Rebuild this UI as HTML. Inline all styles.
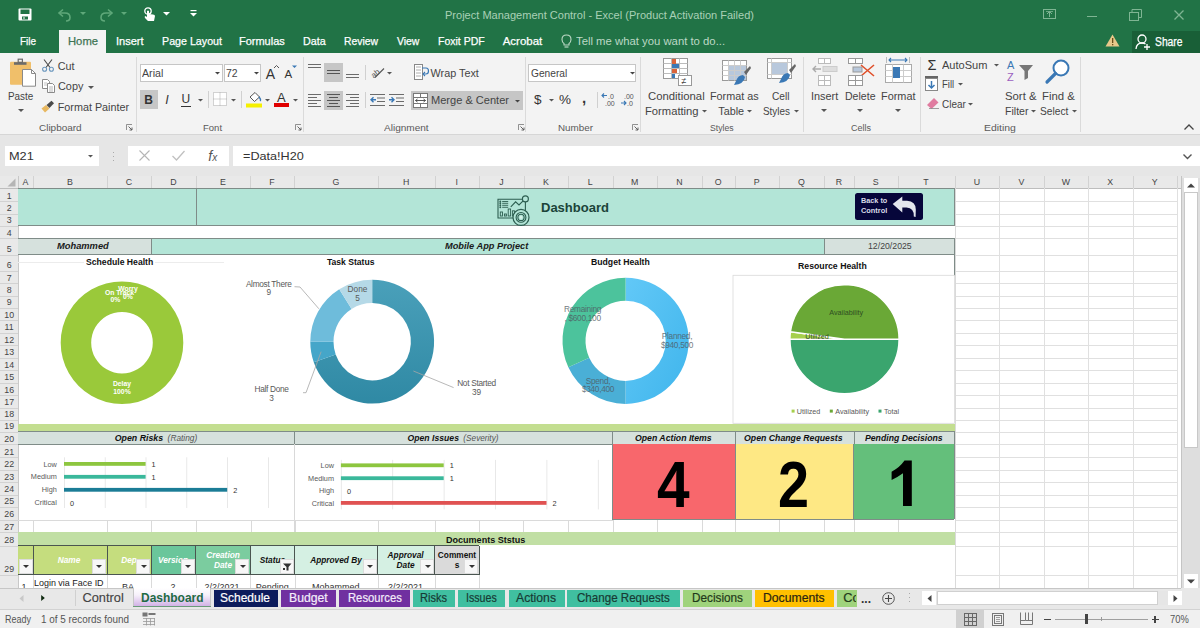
<!DOCTYPE html><html><head><meta charset="utf-8"><style>
html,body{margin:0;padding:0;}
body{width:1200px;height:628px;overflow:hidden;position:relative;background:#fff;font-family:"Liberation Sans",sans-serif;}
.t{position:absolute;white-space:nowrap;line-height:1;}
.r{position:absolute;}
.s{position:absolute;overflow:visible;}
</style></head><body>
<div class="r" style="left:0.00px;top:0.00px;width:1200.00px;height:53.00px;background:#217346;"></div>
<svg class="s" style="left:18.00px;top:8.00px;" width="14" height="13" viewBox="0 0 14 13"><rect x="0.5" y="0.5" width="13" height="12" rx="1" fill="#fff"/><rect x="2.5" y="1.5" width="9" height="4.5" fill="#217346"/><rect x="4" y="8.5" width="6" height="3" fill="#217346"/><rect x="5.5" y="9" width="1" height="2" fill="#fff"/></svg>
<svg class="s" style="left:57.00px;top:8.00px;" width="16" height="14" viewBox="0 0 16 14"><path d="M3 5 L8 5 Q13 5 13 9.5 Q13 13 9 13" stroke="#5fa87a" stroke-width="1.6" fill="none"/><path d="M6 1.5 L2 5 L6 8.5" stroke="#5fa87a" stroke-width="1.6" fill="none"/></svg>
<svg class="s" style="left:80.00px;top:12.00px;" width="6" height="4" viewBox="0 0 6 4"><path d="M0 0 L6 0 L3 3z" fill="#5fa87a"/></svg>
<svg class="s" style="left:98.00px;top:8.00px;" width="16" height="14" viewBox="0 0 16 14"><path d="M13 5 L8 5 Q3 5 3 9.5 Q3 13 7 13" stroke="#5fa87a" stroke-width="1.6" fill="none"/><path d="M10 1.5 L14 5 L10 8.5" stroke="#5fa87a" stroke-width="1.6" fill="none"/></svg>
<svg class="s" style="left:121.00px;top:12.00px;" width="6" height="4" viewBox="0 0 6 4"><path d="M0 0 L6 0 L3 3z" fill="#5fa87a"/></svg>
<svg class="s" style="left:143.00px;top:7.00px;" width="13" height="15" viewBox="0 0 13 15"><circle cx="5" cy="4" r="3.2" stroke="#fff" stroke-width="1.3" fill="none"/><path d="M4 4 L4 10 L2.5 9 Q1 9.5 2 11 L5 14 L11 14 L12 9 Q12 7.5 10 7.5 L6 7 L6 4 Q5 3 4 4z" fill="#fff"/></svg>
<svg class="s" style="left:163.00px;top:12.00px;" width="7" height="4" viewBox="0 0 7 4"><path d="M0 0 L7 0 L3.5 3.5z" fill="#fff"/></svg>
<svg class="s" style="left:190.00px;top:10.00px;" width="7" height="8" viewBox="0 0 7 8"><rect x="0.5" y="0" width="6" height="1.2" fill="#fff"/><path d="M0 3 L7 3 L3.5 6.5z" fill="#fff"/></svg>
<div class="t" style="left:445.00px;top:9.78px;font-size:11.50px;color:#a9d1b6;font-weight:normal;font-style:normal;transform:scaleX(0.959);transform-origin:0 50%;">Project Management Control - Excel (Product Activation Failed)</div>
<svg class="s" style="left:1043.00px;top:9.00px;" width="13" height="10" viewBox="0 0 13 10"><rect x="0.5" y="0.5" width="12" height="9" stroke="#7fb593" fill="none"/><path d="M6.5 8 L6.5 3 M4 5 L6.5 2.5 L9 5" stroke="#7fb593" fill="none"/><rect x="3" y="2" width="7" height="0.8" fill="#7fb593"/></svg>
<div class="r" style="left:1087.00px;top:16.00px;width:10.00px;height:1.00px;background:#7fb593;"></div>
<svg class="s" style="left:1129.00px;top:9.00px;" width="13" height="12" viewBox="0 0 13 12"><rect x="0.5" y="3.5" width="9" height="8" stroke="#7fb593" fill="none"/><path d="M3 3.5 L3 0.5 L12.5 0.5 L12.5 8.5 L9.5 8.5" stroke="#7fb593" fill="none"/></svg>
<svg class="s" style="left:1174.00px;top:10.00px;" width="10" height="10" viewBox="0 0 10 10"><path d="M0.5 0.5 L9.5 9.5 M9.5 0.5 L0.5 9.5" stroke="#7fb593" stroke-width="1.3"/></svg>
<div class="r" style="left:58.70px;top:30.00px;width:47.50px;height:23.00px;background:#f3f3f3;"></div>
<div class="t" style="left:19.70px;top:36.28px;font-size:11.50px;color:#fff;font-weight:normal;font-style:normal;transform:scaleX(0.869);transform-origin:0 50%;-webkit-text-stroke:0.25px currentColor;">File</div>
<div class="t" style="left:67.50px;top:36.28px;font-size:11.50px;color:#3f7354;font-weight:normal;font-style:normal;transform:scaleX(0.978);transform-origin:0 50%;-webkit-text-stroke:0.25px currentColor;">Home</div>
<div class="t" style="left:115.70px;top:36.28px;font-size:11.50px;color:#fff;font-weight:normal;font-style:normal;transform:scaleX(0.960);transform-origin:0 50%;-webkit-text-stroke:0.25px currentColor;">Insert</div>
<div class="t" style="left:161.70px;top:36.28px;font-size:11.50px;color:#fff;font-weight:normal;font-style:normal;transform:scaleX(0.929);transform-origin:0 50%;-webkit-text-stroke:0.25px currentColor;">Page Layout</div>
<div class="t" style="left:239.30px;top:36.28px;font-size:11.50px;color:#fff;font-weight:normal;font-style:normal;transform:scaleX(0.954);transform-origin:0 50%;-webkit-text-stroke:0.25px currentColor;">Formulas</div>
<div class="t" style="left:303.30px;top:36.28px;font-size:11.50px;color:#fff;font-weight:normal;font-style:normal;transform:scaleX(0.934);transform-origin:0 50%;-webkit-text-stroke:0.25px currentColor;">Data</div>
<div class="t" style="left:344.30px;top:36.28px;font-size:11.50px;color:#fff;font-weight:normal;font-style:normal;transform:scaleX(0.902);transform-origin:0 50%;-webkit-text-stroke:0.25px currentColor;">Review</div>
<div class="t" style="left:397.00px;top:36.28px;font-size:11.50px;color:#fff;font-weight:normal;font-style:normal;transform:scaleX(0.902);transform-origin:0 50%;-webkit-text-stroke:0.25px currentColor;">View</div>
<div class="t" style="left:437.70px;top:36.28px;font-size:11.50px;color:#fff;font-weight:normal;font-style:normal;transform:scaleX(0.912);transform-origin:0 50%;-webkit-text-stroke:0.25px currentColor;">Foxit PDF</div>
<div class="t" style="left:502.70px;top:36.28px;font-size:11.50px;color:#fff;font-weight:normal;font-style:normal;-webkit-text-stroke:0.25px currentColor;">Acrobat</div>
<svg class="s" style="left:561.00px;top:34.00px;" width="11" height="15" viewBox="0 0 11 15"><path d="M5.5 1 Q10 1 10 5.5 Q10 8 8 9.5 L8 11 L3 11 L3 9.5 Q1 8 1 5.5 Q1 1 5.5 1z" stroke="#bcd8c5" stroke-width="1.1" fill="none"/><path d="M3.5 13 L7.5 13" stroke="#bcd8c5" stroke-width="1.2"/></svg>
<div class="t" style="left:576.00px;top:36.28px;font-size:11.50px;color:#bcd8c5;font-weight:normal;font-style:normal;transform:scaleX(0.984);transform-origin:0 50%;">Tell me what you want to do...</div>
<svg class="s" style="left:1105.00px;top:34.00px;" width="15" height="13" viewBox="0 0 15 13"><path d="M7.5 0.5 L14.5 12.5 L0.5 12.5z" fill="#e8c88a"/><rect x="7" y="4" width="1.3" height="5" fill="#6b4e1a"/><rect x="7" y="10" width="1.3" height="1.3" fill="#6b4e1a"/></svg>
<div class="r" style="left:1131.70px;top:30.80px;width:68.30px;height:22.20px;background:#195f37;"></div>
<svg class="s" style="left:1135.00px;top:34.00px;" width="16" height="16" viewBox="0 0 16 16"><circle cx="7" cy="5" r="4" stroke="#fff" stroke-width="1.3" fill="none"/><path d="M1 15 Q1.5 9 7 9 Q9 9 10.5 10" stroke="#fff" stroke-width="1.3" fill="none"/><path d="M12 10 L12 16 M9 13 L15 13" stroke="#fff" stroke-width="1.3"/></svg>
<div class="t" style="left:1155.00px;top:35.74px;font-size:12.00px;color:#fff;font-weight:normal;font-style:normal;transform:scaleX(0.859);transform-origin:0 50%;-webkit-text-stroke:0.25px currentColor;">Share</div>
<div class="r" style="left:0.00px;top:53.00px;width:1200.00px;height:81.00px;background:#f3f3f3;"></div>
<div class="r" style="left:0.00px;top:133.50px;width:1200.00px;height:1.00px;background:#d6d6d6;"></div>
<div class="r" style="left:136.00px;top:57.00px;width:1.00px;height:75.00px;background:#dadada;"></div>
<div class="r" style="left:302.50px;top:57.00px;width:1.00px;height:75.00px;background:#dadada;"></div>
<div class="r" style="left:525.00px;top:57.00px;width:1.00px;height:75.00px;background:#dadada;"></div>
<div class="r" style="left:640.30px;top:57.00px;width:1.00px;height:75.00px;background:#dadada;"></div>
<div class="r" style="left:803.00px;top:57.00px;width:1.00px;height:75.00px;background:#dadada;"></div>
<div class="r" style="left:920.30px;top:57.00px;width:1.00px;height:75.00px;background:#dadada;"></div>
<div class="r" style="left:1080.00px;top:57.00px;width:1.00px;height:75.00px;background:#dadada;"></div>
<div class="t" style="left:39.40px;top:123.19px;font-size:9.60px;color:#5a5a5a;font-weight:normal;font-style:normal;transform:scaleX(1.037);transform-origin:0 50%;">Clipboard</div>
<div class="t" style="left:202.75px;top:123.19px;font-size:9.60px;color:#5a5a5a;font-weight:normal;font-style:normal;transform:scaleX(0.992);transform-origin:0 50%;">Font</div>
<div class="t" style="left:384.00px;top:123.19px;font-size:9.60px;color:#5a5a5a;font-weight:normal;font-style:normal;transform:scaleX(1.045);transform-origin:0 50%;">Alignment</div>
<div class="t" style="left:557.50px;top:123.19px;font-size:9.60px;color:#5a5a5a;font-weight:normal;font-style:normal;transform:scaleX(1.025);transform-origin:0 50%;">Number</div>
<div class="t" style="left:709.70px;top:123.19px;font-size:9.60px;color:#5a5a5a;font-weight:normal;font-style:normal;transform:scaleX(0.903);transform-origin:0 50%;">Styles</div>
<div class="t" style="left:851.30px;top:123.19px;font-size:9.60px;color:#5a5a5a;font-weight:normal;font-style:normal;transform:scaleX(0.937);transform-origin:0 50%;">Cells</div>
<div class="t" style="left:983.50px;top:123.19px;font-size:9.60px;color:#5a5a5a;font-weight:normal;font-style:normal;transform:scaleX(1.087);transform-origin:0 50%;">Editing</div>
<svg class="s" style="left:126.00px;top:124.00px;" width="7" height="7" viewBox="0 0 7 7"><path d="M0.5 6 L0.5 0.5 L6 0.5" stroke="#777" fill="none" stroke-width="0.8"/><path d="M2.5 2.5 L6 6 M3.5 6 L6 6 L6 3.5" stroke="#555" fill="none" stroke-width="0.9"/></svg>
<svg class="s" style="left:295.00px;top:124.00px;" width="7" height="7" viewBox="0 0 7 7"><path d="M0.5 6 L0.5 0.5 L6 0.5" stroke="#777" fill="none" stroke-width="0.8"/><path d="M2.5 2.5 L6 6 M3.5 6 L6 6 L6 3.5" stroke="#555" fill="none" stroke-width="0.9"/></svg>
<svg class="s" style="left:518.00px;top:124.00px;" width="7" height="7" viewBox="0 0 7 7"><path d="M0.5 6 L0.5 0.5 L6 0.5" stroke="#777" fill="none" stroke-width="0.8"/><path d="M2.5 2.5 L6 6 M3.5 6 L6 6 L6 3.5" stroke="#555" fill="none" stroke-width="0.9"/></svg>
<svg class="s" style="left:631.70px;top:124.00px;" width="7" height="7" viewBox="0 0 7 7"><path d="M0.5 6 L0.5 0.5 L6 0.5" stroke="#777" fill="none" stroke-width="0.8"/><path d="M2.5 2.5 L6 6 M3.5 6 L6 6 L6 3.5" stroke="#555" fill="none" stroke-width="0.9"/></svg>
<svg class="s" style="left:1184.00px;top:124.00px;" width="10" height="6" viewBox="0 0 10 6"><path d="M0.5 5.5 L5 1 L9.5 5.5" stroke="#444" stroke-width="1.3" fill="none"/></svg>
<svg class="s" style="left:10.00px;top:58.00px;" width="27" height="30" viewBox="0 0 27 30"><rect x="0" y="3.7" width="21" height="23" rx="1" fill="#f0bf6a"/><rect x="4" y="4.2" width="12.5" height="2.6" fill="#6b6b6b"/><rect x="8.2" y="1.2" width="4.2" height="3.2" fill="none" stroke="#6b6b6b" stroke-width="1.2"/><path d="M12.5 11.5 L21.5 11.5 L25.5 15.5 L25.5 28.2 L12.5 28.2z" fill="#fff" stroke="#8a8a8a" stroke-width="1"/><path d="M21.5 11.5 L21.5 15.5 L25.5 15.5" fill="none" stroke="#8a8a8a"/></svg>
<div class="t" style="left:7.90px;top:90.82px;font-size:10.80px;color:#444;font-weight:normal;font-style:normal;transform:scaleX(0.916);transform-origin:0 50%;">Paste</div>
<svg class="s" style="left:17.50px;top:108.50px;" width="6" height="4" viewBox="0 0 6 4"><path d="M0 0 L6 0 L3 3z" fill="#555"/></svg>
<svg class="s" style="left:41.00px;top:59.00px;" width="14" height="13" viewBox="0 0 14 13"><path d="M3 0.5 L9 8.5 M11 0.5 L5 8.5" stroke="#4a4a4a" stroke-width="1.1"/><circle cx="3.6" cy="10.3" r="2" stroke="#6a96bd" stroke-width="1.1" fill="none"/><circle cx="10.4" cy="10.3" r="2" stroke="#6a96bd" stroke-width="1.1" fill="none"/></svg>
<div class="t" style="left:57.70px;top:60.82px;font-size:10.80px;color:#444;font-weight:normal;font-style:normal;">Cut</div>
<svg class="s" style="left:41.50px;top:79.00px;" width="14" height="14" viewBox="0 0 14 14"><path d="M0.5 0.5 L5.5 0.5 L7.5 2.5 L7.5 9.5 L0.5 9.5z" fill="#fff" stroke="#8a8a8a"/><path d="M2 4 L5 4 M2 6 L5 6" stroke="#aaa" stroke-width="0.7"/><path d="M5.5 4.5 L10.5 4.5 L12.5 6.5 L12.5 13.5 L5.5 13.5z" fill="#fff" stroke="#8a8a8a"/><path d="M7 8 L11 8 M7 10 L11 10 M7 12 L11 12" stroke="#999" stroke-width="0.7"/></svg>
<div class="t" style="left:57.70px;top:81.32px;font-size:10.80px;color:#444;font-weight:normal;font-style:normal;transform:scaleX(1.007);transform-origin:0 50%;">Copy</div>
<svg class="s" style="left:88.00px;top:86.00px;" width="6" height="4" viewBox="0 0 6 4"><path d="M0 0 L6 0 L3 3z" fill="#555"/></svg>
<svg class="s" style="left:41.00px;top:100.00px;" width="14" height="13" viewBox="0 0 14 13"><path d="M0.5 8.5 L5 5 L8.5 8.5 L4 12.5z" fill="#e8b860"/><path d="M5.5 5 L10.5 0.8 L13 3.2 L8.5 8z" fill="#4a4a4a"/></svg>
<div class="t" style="left:57.70px;top:101.82px;font-size:10.80px;color:#444;font-weight:normal;font-style:normal;">Format Painter</div>
<div class="r" style="left:139.75px;top:63.50px;width:83.25px;height:18.75px;background:#fff;border:1px solid #c6c6c6;box-sizing:border-box;"></div>
<div class="r" style="left:224.20px;top:63.50px;width:37.05px;height:18.75px;background:#fff;border:1px solid #c6c6c6;box-sizing:border-box;"></div>
<div class="t" style="left:141.70px;top:68.02px;font-size:10.80px;color:#444;font-weight:normal;font-style:normal;transform:scaleX(0.986);transform-origin:0 50%;">Arial</div>
<div class="t" style="left:226.40px;top:68.02px;font-size:10.80px;color:#444;font-weight:normal;font-style:normal;transform:scaleX(0.966);transform-origin:0 50%;">72</div>
<svg class="s" style="left:215.00px;top:72.00px;" width="5" height="3" viewBox="0 0 5 3"><path d="M0 0 L5 0 L2.5 2.5z" fill="#444"/></svg>
<svg class="s" style="left:254.00px;top:72.00px;" width="5" height="3" viewBox="0 0 5 3"><path d="M0 0 L5 0 L2.5 2.5z" fill="#444"/></svg>
<div class="t" style="left:265.70px;top:67.28px;font-size:14.00px;color:#333;font-weight:normal;font-style:normal;">A</div>
<svg class="s" style="left:274.00px;top:65.00px;" width="5" height="4" viewBox="0 0 5 4"><path d="M0 3 L2.5 0.5 L5 3" stroke="#555" fill="none" stroke-width="1"/></svg>
<div class="t" style="left:284.50px;top:69.48px;font-size:11.50px;color:#333;font-weight:normal;font-style:normal;">A</div>
<svg class="s" style="left:292.00px;top:65.00px;" width="5" height="4" viewBox="0 0 5 4"><path d="M0 0.5 L2.5 3 L5 0.5z" fill="#3a78b5"/></svg>
<div class="r" style="left:139.75px;top:90.20px;width:18.00px;height:18.60px;background:#c6c6c6;"></div>
<div class="t" style="left:148.70px;top:93.74px;font-size:12.00px;color:#333;font-weight:bold;font-style:normal;transform:translateX(-50%);transform-origin:50% 50%;">B</div>
<div class="t" style="left:167.00px;top:93.50px;font-size:12.50px;color:#333;font-weight:normal;font-style:italic;transform:translateX(-50%);transform-origin:50% 50%;">I</div>
<div class="t" style="left:185.80px;top:93.24px;font-size:12.00px;color:#333;font-weight:normal;font-style:normal;transform:translateX(-50%);transform-origin:50% 50%;">U</div>
<div class="r" style="left:180.50px;top:106.00px;width:10.50px;height:1.00px;background:#333;"></div>
<svg class="s" style="left:197.50px;top:98.50px;" width="5" height="3" viewBox="0 0 5 3"><path d="M0 0 L5 0 L2.5 2.5z" fill="#555"/></svg>
<div class="r" style="left:207.50px;top:91.00px;width:1.00px;height:17.00px;background:#d0d0d0;"></div>
<svg class="s" style="left:213.00px;top:92.00px;" width="14" height="14" viewBox="0 0 14 14"><rect x="0.5" y="0.5" width="13" height="13" fill="#fff" stroke="#aaa" stroke-dasharray="1 1"/><path d="M7 0.5 L7 13.5 M0.5 7 L13.5 7" stroke="#aaa" stroke-dasharray="1 1"/></svg>
<svg class="s" style="left:231.00px;top:98.50px;" width="5" height="3" viewBox="0 0 5 3"><path d="M0 0 L5 0 L2.5 2.5z" fill="#555"/></svg>
<div class="r" style="left:241.30px;top:91.00px;width:1.00px;height:17.00px;background:#d0d0d0;"></div>
<svg class="s" style="left:246.00px;top:91.00px;" width="16" height="17" viewBox="0 0 16 17"><path d="M4 6 L9 1.5 L13.5 6 L8.5 10.5z" fill="#fff" stroke="#555" stroke-width="1"/><path d="M13 6 Q15.5 9 14 10" stroke="#3a78b5" stroke-width="1.4" fill="none"/><rect x="0" y="12.5" width="16" height="4" fill="#f5f000"/></svg>
<svg class="s" style="left:265.00px;top:98.50px;" width="5" height="3" viewBox="0 0 5 3"><path d="M0 0 L5 0 L2.5 2.5z" fill="#555"/></svg>
<div class="t" style="left:281.30px;top:91.26px;font-size:13.00px;color:#333;font-weight:normal;font-style:normal;transform:translateX(-50%);transform-origin:50% 50%;">A</div>
<div class="r" style="left:274.00px;top:103.25px;width:14.70px;height:3.75px;background:#e00000;"></div>
<svg class="s" style="left:292.50px;top:98.50px;" width="5" height="3" viewBox="0 0 5 3"><path d="M0 0 L5 0 L2.5 2.5z" fill="#555"/></svg>
<svg class="s" style="left:308.00px;top:63.00px;" width="13" height="10" viewBox="0 0 13 10"><rect x="0" y="1" width="13" height="1" fill="#6b6b6b"/><rect x="0" y="4" width="13" height="1" fill="#6b6b6b"/></svg>
<div class="r" style="left:324.00px;top:63.00px;width:18.60px;height:18.60px;background:#c6c6c6;"></div>
<svg class="s" style="left:327.00px;top:69.00px;" width="13" height="7" viewBox="0 0 13 7"><rect x="0" y="1" width="13" height="1" fill="#555"/><rect x="0" y="4" width="13" height="1" fill="#555"/></svg>
<svg class="s" style="left:346.00px;top:72.00px;" width="13" height="7" viewBox="0 0 13 7"><rect x="0" y="2" width="13" height="1" fill="#6b6b6b"/><rect x="0" y="5" width="13" height="1" fill="#6b6b6b"/></svg>
<div class="r" style="left:364.60px;top:65.00px;width:1.00px;height:15.00px;background:#d0d0d0;"></div>
<svg class="s" style="left:371.00px;top:65.00px;" width="14" height="13" viewBox="0 0 14 13"><text x="0" y="10" font-size="8" fill="#555" font-family="Liberation Sans" transform="rotate(-40 6 8)">ab</text><path d="M4 12.5 L13 3.5" stroke="#555" stroke-width="1.1"/></svg>
<svg class="s" style="left:387.00px;top:72.00px;" width="5" height="3" viewBox="0 0 5 3"><path d="M0 0 L5 0 L2.5 2.5z" fill="#555"/></svg>
<svg class="s" style="left:414.00px;top:64.00px;" width="15" height="16" viewBox="0 0 15 16"><rect x="0.5" y="0.5" width="8" height="15" fill="#fff" stroke="#888"/><path d="M2 3 L7 3 M2 6 L7 6 M2 9 L7 9 M2 12 L7 12" stroke="#999" stroke-width="0.8"/><path d="M8 4 L12 4 Q14.5 4 14.5 7 Q14.5 10 12 10 L10 10" stroke="#3a78b5" stroke-width="1.2" fill="none"/><path d="M11 8 L9 10 L11 12" stroke="#3a78b5" stroke-width="1.1" fill="none"/></svg>
<div class="t" style="left:430.60px;top:67.82px;font-size:10.80px;color:#444;font-weight:normal;font-style:normal;">Wrap Text</div>
<svg class="s" style="left:308.00px;top:93.00px;" width="13" height="14" viewBox="0 0 13 14"><rect x="0" y="1" width="13" height="1" fill="#6b6b6b"/><rect x="0" y="4" width="9" height="1" fill="#6b6b6b"/><rect x="0" y="7" width="13" height="1" fill="#6b6b6b"/><rect x="0" y="10" width="9" height="1" fill="#6b6b6b"/><rect x="0" y="13" width="13" height="1" fill="#6b6b6b"/></svg>
<div class="r" style="left:324.00px;top:91.00px;width:18.60px;height:18.60px;background:#c6c6c6;"></div>
<svg class="s" style="left:327.00px;top:93.00px;" width="13" height="14" viewBox="0 0 13 14"><rect x="0" y="1" width="13" height="1" fill="#555"/><rect x="2" y="4" width="9" height="1" fill="#555"/><rect x="0" y="7" width="13" height="1" fill="#555"/><rect x="2" y="10" width="9" height="1" fill="#555"/><rect x="0" y="13" width="13" height="1" fill="#555"/></svg>
<svg class="s" style="left:346.00px;top:93.00px;" width="13" height="14" viewBox="0 0 13 14"><rect x="0" y="1" width="13" height="1" fill="#6b6b6b"/><rect x="4" y="4" width="9" height="1" fill="#6b6b6b"/><rect x="0" y="7" width="13" height="1" fill="#6b6b6b"/><rect x="4" y="10" width="9" height="1" fill="#6b6b6b"/><rect x="0" y="13" width="13" height="1" fill="#6b6b6b"/></svg>
<div class="r" style="left:364.60px;top:92.00px;width:1.00px;height:16.00px;background:#d0d0d0;"></div>
<svg class="s" style="left:370.00px;top:93.00px;" width="15" height="14" viewBox="0 0 15 14"><rect x="0" y="1" width="15" height="1" fill="#6b6b6b"/><rect x="7" y="4.5" width="8" height="1" fill="#6b6b6b"/><rect x="7" y="8" width="8" height="1" fill="#6b6b6b"/><rect x="0" y="12" width="15" height="1" fill="#6b6b6b"/><path d="M6 6.8 L1 6.8 M3.5 4.3 L1 6.8 L3.5 9.3" stroke="#3a78b5" stroke-width="1.4" fill="none"/></svg>
<svg class="s" style="left:388.60px;top:93.00px;" width="15" height="14" viewBox="0 0 15 14"><rect x="0" y="1" width="15" height="1" fill="#6b6b6b"/><rect x="7" y="4.5" width="8" height="1" fill="#6b6b6b"/><rect x="7" y="8" width="8" height="1" fill="#6b6b6b"/><rect x="0" y="12" width="15" height="1" fill="#6b6b6b"/><path d="M0 6.8 L5 6.8 M2.5 4.3 L5 6.8 L2.5 9.3" stroke="#3a78b5" stroke-width="1.4" fill="none"/></svg>
<div class="r" style="left:411.40px;top:91.00px;width:111.20px;height:18.60px;background:#c6c6c6;"></div>
<svg class="s" style="left:413.00px;top:93.00px;" width="15" height="15" viewBox="0 0 15 15"><rect x="0.5" y="0.5" width="14" height="14" fill="#fff" stroke="#777"/><path d="M0.5 4.5 L14.5 4.5 M0.5 10.5 L14.5 10.5 M7.5 0.5 L7.5 4.5 M7.5 10.5 L7.5 14.5" stroke="#777"/><path d="M2.5 7.5 L12.5 7.5 M4.5 6 L2.5 7.5 L4.5 9 M10.5 6 L12.5 7.5 L10.5 9" stroke="#444" stroke-width="0.9" fill="none"/></svg>
<div class="t" style="left:430.60px;top:95.32px;font-size:10.80px;color:#444;font-weight:normal;font-style:normal;transform:scaleX(1.023);transform-origin:0 50%;">Merge &amp; Center</div>
<svg class="s" style="left:515.00px;top:99.50px;" width="5" height="3" viewBox="0 0 5 3"><path d="M0 0 L5 0 L2.5 2.5z" fill="#444"/></svg>
<div class="r" style="left:528.30px;top:63.70px;width:108.00px;height:18.80px;background:#fff;border:1px solid #c6c6c6;box-sizing:border-box;"></div>
<div class="t" style="left:530.80px;top:68.12px;font-size:10.80px;color:#444;font-weight:normal;font-style:normal;transform:scaleX(0.942);transform-origin:0 50%;">General</div>
<svg class="s" style="left:629.50px;top:72.00px;" width="5" height="3" viewBox="0 0 5 3"><path d="M0 0 L5 0 L2.5 2.5z" fill="#444"/></svg>
<div class="t" style="left:537.70px;top:93.02px;font-size:13.50px;color:#333;font-weight:normal;font-style:normal;transform:translateX(-50%);transform-origin:50% 50%;">$</div>
<svg class="s" style="left:548.50px;top:98.50px;" width="5" height="3" viewBox="0 0 5 3"><path d="M0 0 L5 0 L2.5 2.5z" fill="#555"/></svg>
<div class="t" style="left:565.00px;top:93.02px;font-size:13.50px;color:#333;font-weight:normal;font-style:normal;transform:translateX(-50%);transform-origin:50% 50%;">%</div>
<div class="t" style="left:584.00px;top:89.80px;font-size:15.00px;color:#333;font-weight:bold;font-style:normal;transform:translateX(-50%);transform-origin:50% 50%;">,</div>
<div class="r" style="left:596.70px;top:92.00px;width:1.00px;height:16.00px;background:#d0d0d0;"></div>
<svg class="s" style="left:601.00px;top:92.00px;" width="16" height="15" viewBox="0 0 16 15"><path d="M6 3.5 L1 3.5 M3 1.5 L1 3.5 L3 5.5" stroke="#3a78b5" stroke-width="1.1" fill="none"/><text x="7" y="7" font-size="7" fill="#555" font-family="Liberation Sans">.0</text><text x="4" y="14" font-size="7" fill="#555" font-family="Liberation Sans">.00</text></svg>
<svg class="s" style="left:620.00px;top:92.00px;" width="16" height="15" viewBox="0 0 16 15"><text x="4" y="7" font-size="7" fill="#555" font-family="Liberation Sans">.00</text><path d="M1 11 L6 11 M4 9 L6 11 L4 13" stroke="#3a78b5" stroke-width="1.1" fill="none"/><text x="7" y="14" font-size="7" fill="#555" font-family="Liberation Sans">.0</text></svg>
<svg class="s" style="left:662.50px;top:58.00px;" width="29" height="28" viewBox="0 0 29 28"><rect x="0.5" y="0.5" width="24" height="20" fill="#fff" stroke="#999"/><path d="M0.5 5.5 L24.5 5.5 M0.5 10.5 L24.5 10.5 M0.5 15.5 L24.5 15.5 M8.5 0.5 L8.5 20.5 M16.5 0.5 L16.5 20.5" stroke="#bbb"/><rect x="9" y="1" width="4" height="5" fill="#d9643a"/><rect x="9" y="6" width="7" height="4" fill="#3a78b5"/><rect x="9" y="11" width="5" height="4" fill="#d9643a"/><rect x="9" y="16" width="3" height="4" fill="#3a78b5"/><rect x="15.5" y="17.5" width="13" height="10" fill="#fff" stroke="#999"/><text x="18.5" y="26" font-size="9" fill="#444" font-family="Liberation Sans">≠</text></svg>
<div class="t" style="left:647.50px;top:90.62px;font-size:10.80px;color:#444;font-weight:normal;font-style:normal;transform:scaleX(1.049);transform-origin:0 50%;">Conditional</div>
<div class="t" style="left:644.70px;top:106.12px;font-size:10.80px;color:#444;font-weight:normal;font-style:normal;transform:scaleX(1.038);transform-origin:0 50%;">Formatting</div>
<svg class="s" style="left:702.00px;top:110.00px;" width="5" height="3" viewBox="0 0 5 3"><path d="M0 0 L5 0 L2.5 2.5z" fill="#555"/></svg>
<svg class="s" style="left:721.70px;top:60.00px;" width="29" height="27" viewBox="0 0 29 27"><rect x="0.5" y="0.5" width="24" height="20" fill="#fff" stroke="#999"/><rect x="6" y="6" width="18" height="14" fill="#b8c8dc"/><path d="M0.5 5.5 L24.5 5.5 M0.5 10.5 L24.5 10.5 M0.5 15.5 L24.5 15.5 M6.5 0.5 L6.5 20.5 M12.5 0.5 L12.5 20.5 M18.5 0.5 L18.5 20.5" stroke="#ccc"/><path d="M22 12 L28 6 L29 8 L24 15z" fill="#666"/><path d="M14 21 Q16 15 21 15 L23 17 Q22 24 12 25z" fill="#3a78b5"/></svg>
<div class="t" style="left:710.00px;top:90.62px;font-size:10.80px;color:#444;font-weight:normal;font-style:normal;">Format as</div>
<div class="t" style="left:718.30px;top:106.12px;font-size:10.80px;color:#444;font-weight:normal;font-style:normal;">Table</div>
<svg class="s" style="left:746.50px;top:110.00px;" width="5" height="3" viewBox="0 0 5 3"><path d="M0 0 L5 0 L2.5 2.5z" fill="#555"/></svg>
<svg class="s" style="left:767.00px;top:58.00px;" width="29" height="28" viewBox="0 0 29 28"><rect x="0.5" y="0.5" width="24" height="20" fill="#fff" stroke="#999"/><rect x="5" y="5" width="15" height="11" fill="#b8c8dc"/><path d="M0.5 4.5 L24.5 4.5 M0.5 16.5 L24.5 16.5 M4.5 0.5 L4.5 20.5 M20.5 0.5 L20.5 20.5" stroke="#ccc"/><path d="M22 12 L28 6 L29 8 L24 15z" fill="#666"/><path d="M14 21 Q16 15 21 15 L23 17 Q22 24 12 25z" fill="#3a78b5"/></svg>
<div class="t" style="left:771.70px;top:90.62px;font-size:10.80px;color:#444;font-weight:normal;font-style:normal;transform:scaleX(0.941);transform-origin:0 50%;">Cell</div>
<div class="t" style="left:763.00px;top:106.12px;font-size:10.80px;color:#444;font-weight:normal;font-style:normal;transform:scaleX(0.918);transform-origin:0 50%;">Styles</div>
<svg class="s" style="left:793.80px;top:110.00px;" width="5" height="3" viewBox="0 0 5 3"><path d="M0 0 L5 0 L2.5 2.5z" fill="#555"/></svg>
<svg class="s" style="left:810.80px;top:58.00px;" width="27" height="28" viewBox="0 0 27 28"><rect x="7.5" y="0.5" width="12" height="5" fill="#fff" stroke="#bbb"/><path d="M13.5 0.5 L13.5 5.5" stroke="#bbb"/><path d="M10 11 L2 11 M5 8 L2 11 L5 14" stroke="#aaa" stroke-width="1.4" fill="none"/><rect x="12" y="8.5" width="14" height="5" fill="#ddd" stroke="#ccc"/><rect x="7.5" y="17.5" width="12" height="10" fill="#fff" stroke="#bbb"/><path d="M13.5 17.5 L13.5 27.5 M7.5 22.5 L19.5 22.5" stroke="#bbb"/></svg>
<div class="t" style="left:810.80px;top:90.62px;font-size:10.80px;color:#444;font-weight:normal;font-style:normal;transform:scaleX(1.007);transform-origin:0 50%;">Insert</div>
<svg class="s" style="left:821.00px;top:109.00px;" width="6" height="4" viewBox="0 0 6 4"><path d="M0 0 L6 0 L3 3z" fill="#555"/></svg>
<svg class="s" style="left:848.00px;top:58.00px;" width="28" height="28" viewBox="0 0 28 28"><rect x="0.5" y="0.5" width="14" height="5" fill="#fff" stroke="#999"/><path d="M7.5 0.5 L7.5 5.5" stroke="#999"/><rect x="5" y="9" width="9" height="5" fill="#b8c8dc" stroke="#999"/><path d="M13 7 L26 18 M26 7 L13 18" stroke="#e0502a" stroke-width="1.6"/><rect x="0.5" y="17.5" width="14" height="10" fill="#fff" stroke="#999"/><path d="M7.5 17.5 L7.5 27.5 M0.5 22.5 L14.5 22.5" stroke="#999"/></svg>
<div class="t" style="left:845.30px;top:90.62px;font-size:10.80px;color:#444;font-weight:normal;font-style:normal;transform:scaleX(0.977);transform-origin:0 50%;">Delete</div>
<svg class="s" style="left:857.00px;top:109.00px;" width="6" height="4" viewBox="0 0 6 4"><path d="M0 0 L6 0 L3 3z" fill="#555"/></svg>
<svg class="s" style="left:884.70px;top:57.00px;" width="27" height="29" viewBox="0 0 27 29"><path d="M4 3 L22 3 M6 1 L4 3 L6 5 M20 1 L22 3 L20 5" stroke="#3a78b5" stroke-width="1.1" fill="none"/><path d="M1.5 0 L1.5 6 M24.5 0 L24.5 6" stroke="#bbb"/><rect x="0.5" y="7.5" width="26" height="18" fill="#fff" stroke="#aaa"/><path d="M0.5 19.5 L26.5 19.5 M7.5 7.5 L7.5 25.5 M18.5 7.5 L18.5 25.5 M0.5 13.5 L26.5 13.5" stroke="#ccc"/><rect x="8" y="10" width="7" height="11" fill="#3a78b5"/></svg>
<div class="t" style="left:880.80px;top:90.62px;font-size:10.80px;color:#444;font-weight:normal;font-style:normal;transform:scaleX(1.009);transform-origin:0 50%;">Format</div>
<svg class="s" style="left:894.50px;top:109.00px;" width="6" height="4" viewBox="0 0 6 4"><path d="M0 0 L6 0 L3 3z" fill="#555"/></svg>
<div class="t" style="left:932.00px;top:57.84px;font-size:14.50px;color:#333;font-weight:normal;font-style:normal;transform:translateX(-50%);transform-origin:50% 50%;">Σ</div>
<div class="t" style="left:942.00px;top:59.82px;font-size:10.80px;color:#444;font-weight:normal;font-style:normal;transform:scaleX(1.024);transform-origin:0 50%;">AutoSum</div>
<svg class="s" style="left:994.00px;top:64.00px;" width="5" height="3" viewBox="0 0 5 3"><path d="M0 0 L5 0 L2.5 2.5z" fill="#555"/></svg>
<svg class="s" style="left:925.30px;top:75.80px;" width="14" height="15" viewBox="0 0 14 15"><rect x="0.5" y="2.5" width="12" height="12" fill="#fff" stroke="#888"/><rect x="0" y="0" width="13" height="2" fill="#666"/><path d="M6.5 5 L6.5 12 M3.5 9 L6.5 12 L9.5 9" stroke="#3a78b5" stroke-width="1.5" fill="none"/></svg>
<div class="t" style="left:942.00px;top:79.02px;font-size:10.80px;color:#444;font-weight:normal;font-style:normal;transform:scaleX(0.884);transform-origin:0 50%;">Fill</div>
<svg class="s" style="left:957.50px;top:83.00px;" width="5" height="3" viewBox="0 0 5 3"><path d="M0 0 L5 0 L2.5 2.5z" fill="#555"/></svg>
<svg class="s" style="left:925.80px;top:96.70px;" width="14" height="12" viewBox="0 0 14 12"><path d="M1 8 L8 1 L12.5 5.5 L5.5 12z" fill="#e07ca0"/><path d="M3 11.5 L13 11.5" stroke="#888" stroke-width="0.8"/></svg>
<div class="t" style="left:942.00px;top:98.52px;font-size:10.80px;color:#444;font-weight:normal;font-style:normal;transform:scaleX(0.922);transform-origin:0 50%;">Clear</div>
<svg class="s" style="left:968.30px;top:102.50px;" width="5" height="3" viewBox="0 0 5 3"><path d="M0 0 L5 0 L2.5 2.5z" fill="#555"/></svg>
<svg class="s" style="left:1006.00px;top:59.00px;" width="29" height="25" viewBox="0 0 29 25"><text x="1" y="10" font-size="11" fill="#3a78b5" font-family="Liberation Sans">A</text><text x="1" y="22" font-size="11" fill="#9b5fc0" font-family="Liberation Sans">Z</text><path d="M13 6 L27 6 L22 12 L22 19 L18.5 21 L18.5 12z" fill="#777"/></svg>
<div class="t" style="left:1004.90px;top:90.72px;font-size:10.80px;color:#444;font-weight:normal;font-style:normal;transform:scaleX(1.050);transform-origin:0 50%;">Sort &amp;</div>
<div class="t" style="left:1005.40px;top:106.07px;font-size:10.80px;color:#444;font-weight:normal;font-style:normal;transform:scaleX(0.979);transform-origin:0 50%;">Filter</div>
<svg class="s" style="left:1031.30px;top:110.00px;" width="5" height="3" viewBox="0 0 5 3"><path d="M0 0 L5 0 L2.5 2.5z" fill="#555"/></svg>
<svg class="s" style="left:1045.00px;top:59.00px;" width="27" height="26" viewBox="0 0 27 26"><circle cx="16" cy="9" r="7.5" fill="#fff" stroke="#3a78b5" stroke-width="2"/><path d="M10.5 14.5 L2 23" stroke="#3a78b5" stroke-width="3.2" stroke-linecap="round"/></svg>
<div class="t" style="left:1042.00px;top:90.72px;font-size:10.80px;color:#444;font-weight:normal;font-style:normal;transform:scaleX(1.054);transform-origin:0 50%;">Find &amp;</div>
<div class="t" style="left:1040.40px;top:106.07px;font-size:10.80px;color:#444;font-weight:normal;font-style:normal;transform:scaleX(0.944);transform-origin:0 50%;">Select</div>
<svg class="s" style="left:1071.50px;top:110.00px;" width="5" height="3" viewBox="0 0 5 3"><path d="M0 0 L5 0 L2.5 2.5z" fill="#555"/></svg>
<div class="r" style="left:0.00px;top:134.50px;width:1200.00px;height:41.50px;background:#e6e6e6;"></div>
<div class="r" style="left:4.80px;top:145.50px;width:94.40px;height:20.70px;background:#fff;"></div>
<div class="t" style="left:9.30px;top:150.58px;font-size:11.50px;color:#333;font-weight:normal;font-style:normal;transform:scaleX(1.109);transform-origin:0 50%;">M21</div>
<svg class="s" style="left:88.00px;top:154.50px;" width="5" height="3" viewBox="0 0 5 3"><path d="M0 0 L5 0 L2.5 2.5z" fill="#555"/></svg>
<div class="r" style="left:112.50px;top:151.50px;width:1.50px;height:1.50px;background:#aaa;"></div>
<div class="r" style="left:112.50px;top:155.50px;width:1.50px;height:1.50px;background:#aaa;"></div>
<div class="r" style="left:112.50px;top:159.50px;width:1.50px;height:1.50px;background:#aaa;"></div>
<div class="r" style="left:127.80px;top:145.50px;width:101.50px;height:20.70px;background:#fff;"></div>
<svg class="s" style="left:139.00px;top:150.00px;" width="11" height="11" viewBox="0 0 11 11"><path d="M0.5 0.5 L10.5 10.5 M10.5 0.5 L0.5 10.5" stroke="#b5b5b5" stroke-width="1.1"/></svg>
<svg class="s" style="left:172.00px;top:150.00px;" width="13" height="11" viewBox="0 0 13 11"><path d="M0.5 6 L4.5 10 L12.5 1" stroke="#c0c0c0" stroke-width="1.3" fill="none"/></svg>
<div class="t" style="left:212.70px;top:149.48px;font-size:14.00px;color:#555;font-weight:normal;font-style:normal;transform:translateX(-50%);transform-origin:50% 50%;font-family:"Liberation Serif",serif;"><i>f</i><i style="font-size:10px">x</i></div>
<div class="r" style="left:233.30px;top:145.50px;width:966.70px;height:20.70px;background:#fff;"></div>
<div class="t" style="left:243.20px;top:150.58px;font-size:11.50px;color:#333;font-weight:normal;font-style:normal;transform:scaleX(1.099);transform-origin:0 50%;">=Data!H20</div>
<svg class="s" style="left:1183.00px;top:153.50px;" width="9" height="6" viewBox="0 0 9 6"><path d="M0.5 0.5 L4.5 4.5 L8.5 0.5" stroke="#555" stroke-width="1.4" fill="none"/></svg>
<div class="r" style="left:18.00px;top:188.00px;width:1163.00px;height:400.00px;background:#fff;"></div>
<div class="r" style="left:0.00px;top:176.00px;width:1181.00px;height:12.00px;background:#e9e9e9;"></div>
<div class="r" style="left:0.00px;top:176.00px;width:18.00px;height:412.00px;background:#e9e9e9;"></div>
<div class="r" style="left:0.00px;top:187.50px;width:1181.00px;height:1.00px;background:#bdbdbd;"></div>
<div class="r" style="left:17.50px;top:176.00px;width:1.00px;height:412.00px;background:#c8c8c8;"></div>
<svg class="s" style="left:7.00px;top:178.00px;" width="9" height="9" viewBox="0 0 9 9"><path d="M8.5 0.5 L8.5 8.5 L0.5 8.5z" fill="#b5b5b5"/></svg>
<div class="r" style="left:33.00px;top:176.00px;width:1.00px;height:12.00px;background:#d2d2d2;"></div>
<div class="t" style="left:25.50px;top:178.38px;font-size:8.80px;color:#444;font-weight:normal;font-style:normal;transform:translateX(-50%);transform-origin:50% 50%;">A</div>
<div class="r" style="left:107.00px;top:176.00px;width:1.00px;height:12.00px;background:#d2d2d2;"></div>
<div class="t" style="left:70.00px;top:178.38px;font-size:8.80px;color:#444;font-weight:normal;font-style:normal;transform:translateX(-50%);transform-origin:50% 50%;">B</div>
<div class="r" style="left:151.00px;top:176.00px;width:1.00px;height:12.00px;background:#d2d2d2;"></div>
<div class="t" style="left:129.00px;top:178.38px;font-size:8.80px;color:#444;font-weight:normal;font-style:normal;transform:translateX(-50%);transform-origin:50% 50%;">C</div>
<div class="r" style="left:196.00px;top:176.00px;width:1.00px;height:12.00px;background:#d2d2d2;"></div>
<div class="t" style="left:173.50px;top:178.38px;font-size:8.80px;color:#444;font-weight:normal;font-style:normal;transform:translateX(-50%);transform-origin:50% 50%;">D</div>
<div class="r" style="left:250.00px;top:176.00px;width:1.00px;height:12.00px;background:#d2d2d2;"></div>
<div class="t" style="left:223.00px;top:178.38px;font-size:8.80px;color:#444;font-weight:normal;font-style:normal;transform:translateX(-50%);transform-origin:50% 50%;">E</div>
<div class="r" style="left:294.00px;top:176.00px;width:1.00px;height:12.00px;background:#d2d2d2;"></div>
<div class="t" style="left:272.00px;top:178.38px;font-size:8.80px;color:#444;font-weight:normal;font-style:normal;transform:translateX(-50%);transform-origin:50% 50%;">F</div>
<div class="r" style="left:378.00px;top:176.00px;width:1.00px;height:12.00px;background:#d2d2d2;"></div>
<div class="t" style="left:336.00px;top:178.38px;font-size:8.80px;color:#444;font-weight:normal;font-style:normal;transform:translateX(-50%);transform-origin:50% 50%;">G</div>
<div class="r" style="left:434.50px;top:176.00px;width:1.00px;height:12.00px;background:#d2d2d2;"></div>
<div class="t" style="left:406.25px;top:178.38px;font-size:8.80px;color:#444;font-weight:normal;font-style:normal;transform:translateX(-50%);transform-origin:50% 50%;">H</div>
<div class="r" style="left:479.00px;top:176.00px;width:1.00px;height:12.00px;background:#d2d2d2;"></div>
<div class="t" style="left:456.75px;top:178.38px;font-size:8.80px;color:#444;font-weight:normal;font-style:normal;transform:translateX(-50%);transform-origin:50% 50%;">I</div>
<div class="r" style="left:524.00px;top:176.00px;width:1.00px;height:12.00px;background:#d2d2d2;"></div>
<div class="t" style="left:501.50px;top:178.38px;font-size:8.80px;color:#444;font-weight:normal;font-style:normal;transform:translateX(-50%);transform-origin:50% 50%;">J</div>
<div class="r" style="left:568.00px;top:176.00px;width:1.00px;height:12.00px;background:#d2d2d2;"></div>
<div class="t" style="left:546.00px;top:178.38px;font-size:8.80px;color:#444;font-weight:normal;font-style:normal;transform:translateX(-50%);transform-origin:50% 50%;">K</div>
<div class="r" style="left:612.50px;top:176.00px;width:1.00px;height:12.00px;background:#d2d2d2;"></div>
<div class="t" style="left:590.25px;top:178.38px;font-size:8.80px;color:#444;font-weight:normal;font-style:normal;transform:translateX(-50%);transform-origin:50% 50%;">L</div>
<div class="r" style="left:657.00px;top:176.00px;width:1.00px;height:12.00px;background:#d2d2d2;"></div>
<div class="t" style="left:634.75px;top:178.38px;font-size:8.80px;color:#444;font-weight:normal;font-style:normal;transform:translateX(-50%);transform-origin:50% 50%;">M</div>
<div class="r" style="left:702.00px;top:176.00px;width:1.00px;height:12.00px;background:#d2d2d2;"></div>
<div class="t" style="left:679.50px;top:178.38px;font-size:8.80px;color:#444;font-weight:normal;font-style:normal;transform:translateX(-50%);transform-origin:50% 50%;">N</div>
<div class="r" style="left:734.50px;top:176.00px;width:1.00px;height:12.00px;background:#d2d2d2;"></div>
<div class="t" style="left:718.25px;top:178.38px;font-size:8.80px;color:#444;font-weight:normal;font-style:normal;transform:translateX(-50%);transform-origin:50% 50%;">O</div>
<div class="r" style="left:779.00px;top:176.00px;width:1.00px;height:12.00px;background:#d2d2d2;"></div>
<div class="t" style="left:756.75px;top:178.38px;font-size:8.80px;color:#444;font-weight:normal;font-style:normal;transform:translateX(-50%);transform-origin:50% 50%;">P</div>
<div class="r" style="left:824.00px;top:176.00px;width:1.00px;height:12.00px;background:#d2d2d2;"></div>
<div class="t" style="left:801.50px;top:178.38px;font-size:8.80px;color:#444;font-weight:normal;font-style:normal;transform:translateX(-50%);transform-origin:50% 50%;">Q</div>
<div class="r" style="left:854.00px;top:176.00px;width:1.00px;height:12.00px;background:#d2d2d2;"></div>
<div class="t" style="left:839.00px;top:178.38px;font-size:8.80px;color:#444;font-weight:normal;font-style:normal;transform:translateX(-50%);transform-origin:50% 50%;">R</div>
<div class="r" style="left:897.50px;top:176.00px;width:1.00px;height:12.00px;background:#d2d2d2;"></div>
<div class="t" style="left:875.75px;top:178.38px;font-size:8.80px;color:#444;font-weight:normal;font-style:normal;transform:translateX(-50%);transform-origin:50% 50%;">S</div>
<div class="r" style="left:954.50px;top:176.00px;width:1.00px;height:12.00px;background:#d2d2d2;"></div>
<div class="t" style="left:926.00px;top:178.38px;font-size:8.80px;color:#444;font-weight:normal;font-style:normal;transform:translateX(-50%);transform-origin:50% 50%;">T</div>
<div class="r" style="left:999.30px;top:176.00px;width:1.00px;height:12.00px;background:#d2d2d2;"></div>
<div class="t" style="left:976.90px;top:178.38px;font-size:8.80px;color:#444;font-weight:normal;font-style:normal;transform:translateX(-50%);transform-origin:50% 50%;">U</div>
<div class="r" style="left:1043.80px;top:176.00px;width:1.00px;height:12.00px;background:#d2d2d2;"></div>
<div class="t" style="left:1021.55px;top:178.38px;font-size:8.80px;color:#444;font-weight:normal;font-style:normal;transform:translateX(-50%);transform-origin:50% 50%;">V</div>
<div class="r" style="left:1087.80px;top:176.00px;width:1.00px;height:12.00px;background:#d2d2d2;"></div>
<div class="t" style="left:1065.80px;top:178.38px;font-size:8.80px;color:#444;font-weight:normal;font-style:normal;transform:translateX(-50%);transform-origin:50% 50%;">W</div>
<div class="r" style="left:1132.60px;top:176.00px;width:1.00px;height:12.00px;background:#d2d2d2;"></div>
<div class="t" style="left:1110.20px;top:178.38px;font-size:8.80px;color:#444;font-weight:normal;font-style:normal;transform:translateX(-50%);transform-origin:50% 50%;">X</div>
<div class="r" style="left:1176.60px;top:176.00px;width:1.00px;height:12.00px;background:#d2d2d2;"></div>
<div class="t" style="left:1154.60px;top:178.38px;font-size:8.80px;color:#444;font-weight:normal;font-style:normal;transform:translateX(-50%);transform-origin:50% 50%;">Y</div>
<div class="r" style="left:0.00px;top:201.40px;width:18.00px;height:1.00px;background:#d2d2d2;"></div>
<div class="t" style="left:9.20px;top:191.88px;font-size:8.80px;color:#444;font-weight:normal;font-style:normal;transform:translateX(-50%);transform-origin:50% 50%;">1</div>
<div class="r" style="left:0.00px;top:213.60px;width:18.00px;height:1.00px;background:#d2d2d2;"></div>
<div class="t" style="left:9.20px;top:204.08px;font-size:8.80px;color:#444;font-weight:normal;font-style:normal;transform:translateX(-50%);transform-origin:50% 50%;">2</div>
<div class="r" style="left:0.00px;top:225.90px;width:18.00px;height:1.00px;background:#d2d2d2;"></div>
<div class="t" style="left:9.20px;top:216.38px;font-size:8.80px;color:#444;font-weight:normal;font-style:normal;transform:translateX(-50%);transform-origin:50% 50%;">3</div>
<div class="r" style="left:0.00px;top:238.30px;width:18.00px;height:1.00px;background:#d2d2d2;"></div>
<div class="t" style="left:9.20px;top:228.78px;font-size:8.80px;color:#444;font-weight:normal;font-style:normal;transform:translateX(-50%);transform-origin:50% 50%;">4</div>
<div class="r" style="left:0.00px;top:254.50px;width:18.00px;height:1.00px;background:#d2d2d2;"></div>
<div class="t" style="left:9.20px;top:244.98px;font-size:8.80px;color:#444;font-weight:normal;font-style:normal;transform:translateX(-50%);transform-origin:50% 50%;">5</div>
<div class="r" style="left:0.00px;top:270.80px;width:18.00px;height:1.00px;background:#d2d2d2;"></div>
<div class="t" style="left:9.20px;top:261.28px;font-size:8.80px;color:#444;font-weight:normal;font-style:normal;transform:translateX(-50%);transform-origin:50% 50%;">6</div>
<div class="r" style="left:0.00px;top:283.20px;width:18.00px;height:1.00px;background:#d2d2d2;"></div>
<div class="t" style="left:9.20px;top:273.68px;font-size:8.80px;color:#444;font-weight:normal;font-style:normal;transform:translateX(-50%);transform-origin:50% 50%;">7</div>
<div class="r" style="left:0.00px;top:295.50px;width:18.00px;height:1.00px;background:#d2d2d2;"></div>
<div class="t" style="left:9.20px;top:285.98px;font-size:8.80px;color:#444;font-weight:normal;font-style:normal;transform:translateX(-50%);transform-origin:50% 50%;">8</div>
<div class="r" style="left:0.00px;top:307.80px;width:18.00px;height:1.00px;background:#d2d2d2;"></div>
<div class="t" style="left:9.20px;top:298.28px;font-size:8.80px;color:#444;font-weight:normal;font-style:normal;transform:translateX(-50%);transform-origin:50% 50%;">9</div>
<div class="r" style="left:0.00px;top:320.40px;width:18.00px;height:1.00px;background:#d2d2d2;"></div>
<div class="t" style="left:9.20px;top:310.88px;font-size:8.80px;color:#444;font-weight:normal;font-style:normal;transform:translateX(-50%);transform-origin:50% 50%;">10</div>
<div class="r" style="left:0.00px;top:333.00px;width:18.00px;height:1.00px;background:#d2d2d2;"></div>
<div class="t" style="left:9.20px;top:323.48px;font-size:8.80px;color:#444;font-weight:normal;font-style:normal;transform:translateX(-50%);transform-origin:50% 50%;">11</div>
<div class="r" style="left:0.00px;top:345.40px;width:18.00px;height:1.00px;background:#d2d2d2;"></div>
<div class="t" style="left:9.20px;top:335.88px;font-size:8.80px;color:#444;font-weight:normal;font-style:normal;transform:translateX(-50%);transform-origin:50% 50%;">12</div>
<div class="r" style="left:0.00px;top:357.80px;width:18.00px;height:1.00px;background:#d2d2d2;"></div>
<div class="t" style="left:9.20px;top:348.28px;font-size:8.80px;color:#444;font-weight:normal;font-style:normal;transform:translateX(-50%);transform-origin:50% 50%;">13</div>
<div class="r" style="left:0.00px;top:370.30px;width:18.00px;height:1.00px;background:#d2d2d2;"></div>
<div class="t" style="left:9.20px;top:360.78px;font-size:8.80px;color:#444;font-weight:normal;font-style:normal;transform:translateX(-50%);transform-origin:50% 50%;">14</div>
<div class="r" style="left:0.00px;top:382.70px;width:18.00px;height:1.00px;background:#d2d2d2;"></div>
<div class="t" style="left:9.20px;top:373.18px;font-size:8.80px;color:#444;font-weight:normal;font-style:normal;transform:translateX(-50%);transform-origin:50% 50%;">15</div>
<div class="r" style="left:0.00px;top:395.10px;width:18.00px;height:1.00px;background:#d2d2d2;"></div>
<div class="t" style="left:9.20px;top:385.58px;font-size:8.80px;color:#444;font-weight:normal;font-style:normal;transform:translateX(-50%);transform-origin:50% 50%;">16</div>
<div class="r" style="left:0.00px;top:407.50px;width:18.00px;height:1.00px;background:#d2d2d2;"></div>
<div class="t" style="left:9.20px;top:397.98px;font-size:8.80px;color:#444;font-weight:normal;font-style:normal;transform:translateX(-50%);transform-origin:50% 50%;">17</div>
<div class="r" style="left:0.00px;top:420.00px;width:18.00px;height:1.00px;background:#d2d2d2;"></div>
<div class="t" style="left:9.20px;top:410.48px;font-size:8.80px;color:#444;font-weight:normal;font-style:normal;transform:translateX(-50%);transform-origin:50% 50%;">18</div>
<div class="r" style="left:0.00px;top:431.50px;width:18.00px;height:1.00px;background:#d2d2d2;"></div>
<div class="t" style="left:9.20px;top:421.98px;font-size:8.80px;color:#444;font-weight:normal;font-style:normal;transform:translateX(-50%);transform-origin:50% 50%;">19</div>
<div class="r" style="left:0.00px;top:444.30px;width:18.00px;height:1.00px;background:#d2d2d2;"></div>
<div class="t" style="left:9.20px;top:434.78px;font-size:8.80px;color:#444;font-weight:normal;font-style:normal;transform:translateX(-50%);transform-origin:50% 50%;">20</div>
<div class="r" style="left:0.00px;top:457.30px;width:18.00px;height:1.00px;background:#d2d2d2;"></div>
<div class="t" style="left:9.20px;top:447.78px;font-size:8.80px;color:#444;font-weight:normal;font-style:normal;transform:translateX(-50%);transform-origin:50% 50%;">21</div>
<div class="r" style="left:0.00px;top:469.70px;width:18.00px;height:1.00px;background:#d2d2d2;"></div>
<div class="t" style="left:9.20px;top:460.18px;font-size:8.80px;color:#444;font-weight:normal;font-style:normal;transform:translateX(-50%);transform-origin:50% 50%;">22</div>
<div class="r" style="left:0.00px;top:482.20px;width:18.00px;height:1.00px;background:#d2d2d2;"></div>
<div class="t" style="left:9.20px;top:472.68px;font-size:8.80px;color:#444;font-weight:normal;font-style:normal;transform:translateX(-50%);transform-origin:50% 50%;">23</div>
<div class="r" style="left:0.00px;top:494.60px;width:18.00px;height:1.00px;background:#d2d2d2;"></div>
<div class="t" style="left:9.20px;top:485.08px;font-size:8.80px;color:#444;font-weight:normal;font-style:normal;transform:translateX(-50%);transform-origin:50% 50%;">24</div>
<div class="r" style="left:0.00px;top:507.00px;width:18.00px;height:1.00px;background:#d2d2d2;"></div>
<div class="t" style="left:9.20px;top:497.48px;font-size:8.80px;color:#444;font-weight:normal;font-style:normal;transform:translateX(-50%);transform-origin:50% 50%;">25</div>
<div class="r" style="left:0.00px;top:519.50px;width:18.00px;height:1.00px;background:#d2d2d2;"></div>
<div class="t" style="left:9.20px;top:509.98px;font-size:8.80px;color:#444;font-weight:normal;font-style:normal;transform:translateX(-50%);transform-origin:50% 50%;">26</div>
<div class="r" style="left:0.00px;top:532.10px;width:18.00px;height:1.00px;background:#d2d2d2;"></div>
<div class="t" style="left:9.20px;top:522.58px;font-size:8.80px;color:#444;font-weight:normal;font-style:normal;transform:translateX(-50%);transform-origin:50% 50%;">27</div>
<div class="r" style="left:0.00px;top:545.50px;width:18.00px;height:1.00px;background:#d2d2d2;"></div>
<div class="t" style="left:9.20px;top:535.98px;font-size:8.80px;color:#444;font-weight:normal;font-style:normal;transform:translateX(-50%);transform-origin:50% 50%;">28</div>
<div class="r" style="left:0.00px;top:574.50px;width:18.00px;height:1.00px;background:#d2d2d2;"></div>
<div class="t" style="left:9.20px;top:564.98px;font-size:8.80px;color:#444;font-weight:normal;font-style:normal;transform:translateX(-50%);transform-origin:50% 50%;">29</div>
<div class="r" style="left:999.30px;top:188.00px;width:1.00px;height:400.00px;background:#e0e0e0;"></div>
<div class="r" style="left:1043.80px;top:188.00px;width:1.00px;height:400.00px;background:#e0e0e0;"></div>
<div class="r" style="left:1087.80px;top:188.00px;width:1.00px;height:400.00px;background:#e0e0e0;"></div>
<div class="r" style="left:1132.60px;top:188.00px;width:1.00px;height:400.00px;background:#e0e0e0;"></div>
<div class="r" style="left:1176.60px;top:188.00px;width:1.00px;height:400.00px;background:#e0e0e0;"></div>
<div class="r" style="left:954.50px;top:201.40px;width:222.50px;height:1.00px;background:#e0e0e0;"></div>
<div class="r" style="left:954.50px;top:213.60px;width:222.50px;height:1.00px;background:#e0e0e0;"></div>
<div class="r" style="left:954.50px;top:225.90px;width:222.50px;height:1.00px;background:#e0e0e0;"></div>
<div class="r" style="left:954.50px;top:238.30px;width:222.50px;height:1.00px;background:#e0e0e0;"></div>
<div class="r" style="left:954.50px;top:254.50px;width:222.50px;height:1.00px;background:#e0e0e0;"></div>
<div class="r" style="left:954.50px;top:270.80px;width:222.50px;height:1.00px;background:#e0e0e0;"></div>
<div class="r" style="left:954.50px;top:283.20px;width:222.50px;height:1.00px;background:#e0e0e0;"></div>
<div class="r" style="left:954.50px;top:295.50px;width:222.50px;height:1.00px;background:#e0e0e0;"></div>
<div class="r" style="left:954.50px;top:307.80px;width:222.50px;height:1.00px;background:#e0e0e0;"></div>
<div class="r" style="left:954.50px;top:320.40px;width:222.50px;height:1.00px;background:#e0e0e0;"></div>
<div class="r" style="left:954.50px;top:333.00px;width:222.50px;height:1.00px;background:#e0e0e0;"></div>
<div class="r" style="left:954.50px;top:345.40px;width:222.50px;height:1.00px;background:#e0e0e0;"></div>
<div class="r" style="left:954.50px;top:357.80px;width:222.50px;height:1.00px;background:#e0e0e0;"></div>
<div class="r" style="left:954.50px;top:370.30px;width:222.50px;height:1.00px;background:#e0e0e0;"></div>
<div class="r" style="left:954.50px;top:382.70px;width:222.50px;height:1.00px;background:#e0e0e0;"></div>
<div class="r" style="left:954.50px;top:395.10px;width:222.50px;height:1.00px;background:#e0e0e0;"></div>
<div class="r" style="left:954.50px;top:407.50px;width:222.50px;height:1.00px;background:#e0e0e0;"></div>
<div class="r" style="left:954.50px;top:420.00px;width:222.50px;height:1.00px;background:#e0e0e0;"></div>
<div class="r" style="left:954.50px;top:431.50px;width:222.50px;height:1.00px;background:#e0e0e0;"></div>
<div class="r" style="left:954.50px;top:444.30px;width:222.50px;height:1.00px;background:#e0e0e0;"></div>
<div class="r" style="left:954.50px;top:457.30px;width:222.50px;height:1.00px;background:#e0e0e0;"></div>
<div class="r" style="left:954.50px;top:469.70px;width:222.50px;height:1.00px;background:#e0e0e0;"></div>
<div class="r" style="left:954.50px;top:482.20px;width:222.50px;height:1.00px;background:#e0e0e0;"></div>
<div class="r" style="left:954.50px;top:494.60px;width:222.50px;height:1.00px;background:#e0e0e0;"></div>
<div class="r" style="left:954.50px;top:507.00px;width:222.50px;height:1.00px;background:#e0e0e0;"></div>
<div class="r" style="left:954.50px;top:519.50px;width:222.50px;height:1.00px;background:#e0e0e0;"></div>
<div class="r" style="left:954.50px;top:532.10px;width:222.50px;height:1.00px;background:#e0e0e0;"></div>
<div class="r" style="left:954.50px;top:545.50px;width:222.50px;height:1.00px;background:#e0e0e0;"></div>
<div class="r" style="left:954.50px;top:574.50px;width:222.50px;height:1.00px;background:#e0e0e0;"></div>
<div class="r" style="left:954.50px;top:188.00px;width:1.00px;height:400.00px;background:#dadada;"></div>
<div class="r" style="left:1181.30px;top:176.00px;width:18.70px;height:412.00px;background:#dedede;"></div>
<div class="r" style="left:1181.30px;top:176.00px;width:18.70px;height:2.00px;background:#e6e6e6;"></div>
<div class="r" style="left:1181.00px;top:176.00px;width:1.00px;height:412.00px;background:#c4c4c4;"></div>
<div class="r" style="left:1183.70px;top:178.00px;width:14.50px;height:14.30px;background:#fff;"></div>
<div class="r" style="left:1183.70px;top:192.30px;width:14.50px;height:256.20px;background:#fff;border:1px solid #c8c8c8;box-sizing:border-box;"></div>
<svg class="s" style="left:1187.00px;top:183.00px;" width="8" height="5" viewBox="0 0 8 5"><path d="M0 4.5 L4 0.5 L8 4.5z" fill="#444"/></svg>
<div class="r" style="left:1183.70px;top:573.70px;width:14.50px;height:14.30px;background:#fff;"></div>
<svg class="s" style="left:1187.00px;top:578.50px;" width="8" height="5" viewBox="0 0 8 5"><path d="M0 0.5 L4 4.5 L8 0.5z" fill="#444"/></svg>
<div class="r" style="left:18.00px;top:188.20px;width:936.50px;height:37.70px;background:#b3e5d7;"></div>
<div class="r" style="left:18.00px;top:187.70px;width:936.50px;height:1.00px;background:#7f8c88;"></div>
<div class="r" style="left:18.00px;top:225.40px;width:936.50px;height:1.00px;background:#7f8c88;"></div>
<div class="r" style="left:195.50px;top:188.20px;width:1.00px;height:37.70px;background:#7f8c88;"></div>
<div class="r" style="left:954.00px;top:188.20px;width:1.00px;height:37.70px;background:#7f8c88;"></div>
<svg class="s" style="left:497.00px;top:195.00px;" width="34" height="32" viewBox="0 0 34 32"><g fill="none" stroke="#2c5e50" stroke-width="1.1">
<path d="M28.4 16 L28.4 4.2 L1 4.2 L1 23 L17 23"/>
<circle cx="3.3" cy="6.5" r="0.4" fill="#2c5e50"/><circle cx="3.3" cy="8.3" r="0.4" fill="#2c5e50"/><circle cx="3.3" cy="10.3" r="0.4" fill="#2c5e50"/><circle cx="3.3" cy="12.3" r="0.4" fill="#2c5e50"/>
<path d="M5.2 6.5 L11.2 6.5 M5.2 8.3 L11.2 8.3 M5.2 10.3 L11.2 10.3 M5.2 12.3 L11.2 12.3" stroke-width="0.9"/>
<path d="M13.8 11.9 L18.6 6.8 L22 10 L26.4 5.6"/>
<circle cx="28.4" cy="3.9" r="3" fill="#b3e5d7"/>
<rect x="3.3" y="17" width="2.2" height="4" stroke-width="0.9"/><rect x="7.4" y="19" width="2" height="2" stroke-width="0.9"/><rect x="11.2" y="14" width="2.4" height="7" stroke-width="0.9"/><rect x="15.4" y="15.8" width="2" height="5.2" stroke-width="0.9"/>
<circle cx="24" cy="22.4" r="8" fill="#b3e5d7" stroke-width="1.2"/>
<circle cx="24" cy="22.4" r="4.9"/>
<circle cx="24" cy="22.4" r="3.1"/>
<circle cx="24" cy="22.4" r="1.3" fill="#d9f3ea" stroke="none"/>
</g></svg>
<div class="t" style="left:541.00px;top:200.66px;font-size:13.20px;color:#1b4439;font-weight:bold;font-style:normal;transform:scaleX(0.986);transform-origin:0 50%;">Dashboard</div>
<div class="r" style="left:854.90px;top:192.80px;width:68.30px;height:26.80px;background:#06063a;border-radius:2.5px;"></div>
<div class="t" style="left:860.90px;top:197.45px;font-size:7.60px;color:#d8dbe8;font-weight:bold;font-style:normal;transform:scaleX(0.958);transform-origin:0 50%;">Back to</div>
<div class="t" style="left:860.90px;top:207.05px;font-size:7.60px;color:#d8dbe8;font-weight:bold;font-style:normal;transform:scaleX(0.973);transform-origin:0 50%;">Control</div>
<svg class="s" style="left:892.00px;top:195.50px;" width="26" height="23" viewBox="0 0 26 23"><path d="M0.7 8 L10.3 0.4 L10.3 4.7 L15 4.7 Q23.8 5.2 23.8 13.5 L23.6 21 L21.8 20.5 Q22.2 12 14.5 11.6 L10.3 11.6 L10.3 16.4Z" fill="#e3e6ee"/></svg>
<div class="r" style="left:18.00px;top:238.30px;width:133.00px;height:16.20px;background:#d6e1dd;"></div>
<div class="r" style="left:151.00px;top:238.30px;width:673.00px;height:16.20px;background:#b3e5d7;"></div>
<div class="r" style="left:824.00px;top:238.30px;width:130.50px;height:16.20px;background:#d6e1dd;"></div>
<div class="r" style="left:18.00px;top:237.80px;width:936.50px;height:1.00px;background:#7f8c88;"></div>
<div class="r" style="left:18.00px;top:254.00px;width:936.50px;height:1.00px;background:#7f8c88;"></div>
<div class="r" style="left:150.50px;top:238.30px;width:1.00px;height:16.20px;background:#7f8c88;"></div>
<div class="r" style="left:823.50px;top:238.30px;width:1.00px;height:16.20px;background:#7f8c88;"></div>
<div class="r" style="left:954.00px;top:238.30px;width:1.00px;height:16.20px;background:#7f8c88;"></div>
<div class="t" style="left:57.00px;top:241.98px;font-size:9.00px;color:#1a1a1a;font-weight:bold;font-style:italic;transform:scaleX(1.035);transform-origin:0 50%;">Mohammed</div>
<div class="t" style="left:445.00px;top:241.98px;font-size:9.00px;color:#1a1a1a;font-weight:bold;font-style:italic;transform:scaleX(1.026);transform-origin:0 50%;">Mobile App Project</div>
<div class="t" style="left:867.70px;top:242.08px;font-size:9.00px;color:#444;font-weight:normal;font-style:normal;transform:scaleX(0.970);transform-origin:0 50%;">12/20/2025</div>
<div class="r" style="left:954.00px;top:254.50px;width:1.00px;height:21.00px;background:#7f8c88;"></div>
<div class="r" style="left:18.00px;top:424.00px;width:936.50px;height:7.50px;background:#c3de90;"></div>
<div class="r" style="left:18.00px;top:431.50px;width:936.50px;height:12.80px;background:#d6e1dd;"></div>
<div class="r" style="left:18.00px;top:431.00px;width:936.50px;height:1.00px;background:#7f8c88;"></div>
<div class="r" style="left:18.00px;top:443.80px;width:936.50px;height:1.00px;background:#7f8c88;"></div>
<div class="r" style="left:294.20px;top:431.50px;width:1.00px;height:12.80px;background:#7f8c88;"></div>
<div class="r" style="left:612.20px;top:431.50px;width:1.00px;height:12.80px;background:#7f8c88;"></div>
<div class="r" style="left:734.50px;top:431.50px;width:1.00px;height:12.80px;background:#7f8c88;"></div>
<div class="r" style="left:853.50px;top:431.50px;width:1.00px;height:12.80px;background:#7f8c88;"></div>
<div class="r" style="left:954.00px;top:431.50px;width:1.00px;height:12.80px;background:#7f8c88;"></div>
<div class="t" style="left:155.60px;top:434.07px;font-size:8.60px;color:#111;font-weight:normal;font-style:italic;transform:translateX(-50%) scaleX(1.023);transform-origin:50% 50%;"><b>Open Risks</b> <span style="font-weight:normal;color:#555;margin-left:2px;font-size:0.95em">(Rating)</span></div>
<div class="t" style="left:453.10px;top:434.07px;font-size:8.60px;color:#111;font-weight:normal;font-style:italic;transform:translateX(-50%) scaleX(1.006);transform-origin:50% 50%;"><b>Open Issues</b> <span style="font-weight:normal;color:#555;margin-left:2px;font-size:0.95em">(Severity)</span></div>
<div class="t" style="left:635.00px;top:434.07px;font-size:8.60px;color:#111;font-weight:bold;font-style:italic;transform:scaleX(1.014);transform-origin:0 50%;">Open Action Items</div>
<div class="t" style="left:744.00px;top:434.07px;font-size:8.60px;color:#111;font-weight:bold;font-style:italic;transform:scaleX(1.017);transform-origin:0 50%;">Open Change Requests</div>
<div class="t" style="left:865.00px;top:434.07px;font-size:8.60px;color:#111;font-weight:bold;font-style:italic;transform:scaleX(1.010);transform-origin:0 50%;">Pending Decisions</div>
<div class="r" style="left:612.70px;top:444.30px;width:122.30px;height:75.20px;background:#f8676c;"></div>
<div class="r" style="left:735.00px;top:444.30px;width:118.50px;height:75.20px;background:#fee884;"></div>
<div class="r" style="left:853.50px;top:444.30px;width:101.00px;height:75.20px;background:#64bf7b;"></div>
<div class="r" style="left:612.20px;top:444.30px;width:1.00px;height:75.20px;background:#7f8c88;"></div>
<div class="r" style="left:734.50px;top:444.30px;width:1.00px;height:75.20px;background:#7f8c88;"></div>
<div class="r" style="left:853.30px;top:444.30px;width:1.00px;height:75.20px;background:#7f8c88;"></div>
<div class="r" style="left:954.00px;top:444.30px;width:1.00px;height:75.20px;background:#7f8c88;"></div>
<div class="r" style="left:612.20px;top:519.00px;width:342.30px;height:1.00px;background:#7f8c88;"></div>
<div class="t" style="left:656.70px;top:452.68px;font-size:64.00px;color:#000;font-weight:bold;font-style:normal;transform:scaleX(0.916);transform-origin:0 50%;">4</div>
<div class="t" style="left:778.30px;top:452.68px;font-size:64.00px;color:#000;font-weight:bold;font-style:normal;transform:scaleX(0.871);transform-origin:0 50%;">2</div>
<svg class="s" style="left:0.00px;top:0.00px;" width="1200" height="628" viewBox="0 0 1200 628"><path d="M904.5 460.4 L911.8 460.4 L911.8 505.9 L903 505.9 L903 473.3 Q898 477 891.6 480 L891.6 471.7 Q900 467 904.5 460.4Z" fill="#000"/></svg>
<div class="r" style="left:294.20px;top:444.30px;width:1.00px;height:87.70px;background:#d9d9d9;"></div>
<div class="r" style="left:18.00px;top:519.50px;width:594.50px;height:1.00px;background:#dadada;"></div>
<div class="r" style="left:18.00px;top:532.00px;width:936.50px;height:1.00px;background:#dadada;"></div>
<div class="r" style="left:32.50px;top:519.50px;width:1.00px;height:12.60px;background:#dadada;"></div>
<div class="r" style="left:106.70px;top:519.50px;width:1.00px;height:12.60px;background:#dadada;"></div>
<div class="r" style="left:150.70px;top:519.50px;width:1.00px;height:12.60px;background:#dadada;"></div>
<div class="r" style="left:195.50px;top:519.50px;width:1.00px;height:12.60px;background:#dadada;"></div>
<div class="r" style="left:250.70px;top:519.50px;width:1.00px;height:12.60px;background:#dadada;"></div>
<div class="r" style="left:294.70px;top:519.50px;width:1.00px;height:12.60px;background:#dadada;"></div>
<div class="r" style="left:378.00px;top:519.50px;width:1.00px;height:12.60px;background:#dadada;"></div>
<div class="r" style="left:434.80px;top:519.50px;width:1.00px;height:12.60px;background:#dadada;"></div>
<div class="r" style="left:479.20px;top:519.50px;width:1.00px;height:12.60px;background:#dadada;"></div>
<div class="r" style="left:523.20px;top:519.50px;width:1.00px;height:12.60px;background:#dadada;"></div>
<div class="r" style="left:568.40px;top:519.50px;width:1.00px;height:12.60px;background:#dadada;"></div>
<div class="r" style="left:612.50px;top:519.50px;width:1.00px;height:12.60px;background:#dadada;"></div>
<div class="r" style="left:657.00px;top:519.50px;width:1.00px;height:12.60px;background:#dadada;"></div>
<div class="r" style="left:702.00px;top:519.50px;width:1.00px;height:12.60px;background:#dadada;"></div>
<div class="r" style="left:734.50px;top:519.50px;width:1.00px;height:12.60px;background:#dadada;"></div>
<div class="r" style="left:779.00px;top:519.50px;width:1.00px;height:12.60px;background:#dadada;"></div>
<div class="r" style="left:824.00px;top:519.50px;width:1.00px;height:12.60px;background:#dadada;"></div>
<div class="r" style="left:854.00px;top:519.50px;width:1.00px;height:12.60px;background:#dadada;"></div>
<div class="r" style="left:897.50px;top:519.50px;width:1.00px;height:12.60px;background:#dadada;"></div>
<div class="r" style="left:18.00px;top:532.10px;width:936.50px;height:13.40px;background:#c1dfa4;"></div>
<div class="t" style="left:446.25px;top:535.72px;font-size:8.50px;color:#111;font-weight:bold;font-style:normal;transform:scaleX(1.063);transform-origin:0 50%;">Documents Ststus</div>
<div class="r" style="left:18.00px;top:545.50px;width:15.00px;height:29.00px;background:#c5dd7e;"></div>
<div class="r" style="left:33.00px;top:545.50px;width:74.00px;height:29.00px;background:#c5dd7e;"></div>
<div class="r" style="left:107.00px;top:545.50px;width:44.00px;height:29.00px;background:#c5dd7e;"></div>
<div class="r" style="left:151.00px;top:545.50px;width:44.50px;height:29.00px;background:#6ac69b;"></div>
<div class="r" style="left:195.50px;top:545.50px;width:54.80px;height:29.00px;background:#7bcc9f;"></div>
<div class="r" style="left:250.30px;top:545.50px;width:44.30px;height:29.00px;background:#d5f0e3;"></div>
<div class="r" style="left:294.60px;top:545.50px;width:82.90px;height:29.00px;background:#d5f0e3;"></div>
<div class="r" style="left:377.50px;top:545.50px;width:57.30px;height:29.00px;background:#d5f0e3;"></div>
<div class="r" style="left:434.80px;top:545.50px;width:44.40px;height:29.00px;background:#dadada;"></div>
<div class="t" style="left:69.00px;top:556.02px;font-size:8.30px;color:#fff;font-weight:bold;font-style:italic;transform:translateX(-50%);transform-origin:50% 50%;">Name</div>
<div class="t" style="left:129.00px;top:556.02px;font-size:8.30px;color:#fff;font-weight:bold;font-style:italic;transform:translateX(-50%);transform-origin:50% 50%;">Dep</div>
<div class="t" style="left:173.00px;top:556.02px;font-size:8.30px;color:#fff;font-weight:bold;font-style:italic;transform:translateX(-50%);transform-origin:50% 50%;">Version</div>
<div class="t" style="left:223.00px;top:551.02px;font-size:8.30px;color:#fff;font-weight:bold;font-style:italic;transform:translateX(-50%);transform-origin:50% 50%;">Creation</div>
<div class="t" style="left:223.00px;top:561.02px;font-size:8.30px;color:#fff;font-weight:bold;font-style:italic;transform:translateX(-50%);transform-origin:50% 50%;">Date</div>
<div class="t" style="left:272.50px;top:556.02px;font-size:8.30px;color:#111;font-weight:bold;font-style:italic;transform:translateX(-50%);transform-origin:50% 50%;">Status</div>
<div class="t" style="left:336.00px;top:556.02px;font-size:8.30px;color:#111;font-weight:bold;font-style:italic;transform:translateX(-50%);transform-origin:50% 50%;">Approved By</div>
<div class="t" style="left:405.60px;top:551.02px;font-size:8.30px;color:#111;font-weight:bold;font-style:italic;transform:translateX(-50%);transform-origin:50% 50%;">Approval</div>
<div class="t" style="left:405.60px;top:561.02px;font-size:8.30px;color:#111;font-weight:bold;font-style:italic;transform:translateX(-50%);transform-origin:50% 50%;">Date</div>
<div class="t" style="left:457.00px;top:551.02px;font-size:8.30px;color:#111;font-weight:bold;font-style:normal;transform:translateX(-50%);transform-origin:50% 50%;">Comment</div>
<div class="t" style="left:457.00px;top:561.02px;font-size:8.30px;color:#111;font-weight:bold;font-style:normal;transform:translateX(-50%);transform-origin:50% 50%;">s</div>
<div class="r" style="left:18.50px;top:559.00px;width:14.00px;height:15.00px;background:#f7f7f7;border:1px solid #dcdcdc;box-sizing:border-box;"></div>
<svg class="s" style="left:23.00px;top:565.00px;" width="6" height="4" viewBox="0 0 6 4"><path d="M0 0 L6 0 L3 3z" fill="#333"/></svg>
<div class="r" style="left:91.50px;top:559.00px;width:14.00px;height:15.00px;background:#f7f7f7;border:1px solid #dcdcdc;box-sizing:border-box;"></div>
<svg class="s" style="left:96.00px;top:565.00px;" width="6" height="4" viewBox="0 0 6 4"><path d="M0 0 L6 0 L3 3z" fill="#333"/></svg>
<div class="r" style="left:136.00px;top:559.00px;width:14.00px;height:15.00px;background:#f7f7f7;border:1px solid #dcdcdc;box-sizing:border-box;"></div>
<svg class="s" style="left:140.50px;top:565.00px;" width="6" height="4" viewBox="0 0 6 4"><path d="M0 0 L6 0 L3 3z" fill="#333"/></svg>
<div class="r" style="left:180.50px;top:559.00px;width:14.00px;height:15.00px;background:#f7f7f7;border:1px solid #dcdcdc;box-sizing:border-box;"></div>
<svg class="s" style="left:185.00px;top:565.00px;" width="6" height="4" viewBox="0 0 6 4"><path d="M0 0 L6 0 L3 3z" fill="#333"/></svg>
<div class="r" style="left:235.00px;top:559.00px;width:14.00px;height:15.00px;background:#f7f7f7;border:1px solid #dcdcdc;box-sizing:border-box;"></div>
<svg class="s" style="left:239.50px;top:565.00px;" width="6" height="4" viewBox="0 0 6 4"><path d="M0 0 L6 0 L3 3z" fill="#333"/></svg>
<div class="r" style="left:279.60px;top:559.00px;width:14.00px;height:15.00px;background:#f7f7f7;border:1px solid #dcdcdc;box-sizing:border-box;"></div>
<svg class="s" style="left:282.60px;top:562.50px;" width="9" height="8" viewBox="0 0 9 8"><path d="M0 0.5 L8.5 0.5 L5.5 4 L5.5 7.5 L3.5 7.5 L3.5 4z" fill="#333"/><rect x="0" y="5" width="2" height="2" fill="#333"/></svg>
<div class="r" style="left:362.50px;top:559.00px;width:14.00px;height:15.00px;background:#f7f7f7;border:1px solid #dcdcdc;box-sizing:border-box;"></div>
<svg class="s" style="left:367.00px;top:565.00px;" width="6" height="4" viewBox="0 0 6 4"><path d="M0 0 L6 0 L3 3z" fill="#333"/></svg>
<div class="r" style="left:420.00px;top:559.00px;width:14.00px;height:15.00px;background:#f7f7f7;border:1px solid #dcdcdc;box-sizing:border-box;"></div>
<svg class="s" style="left:424.50px;top:565.00px;" width="6" height="4" viewBox="0 0 6 4"><path d="M0 0 L6 0 L3 3z" fill="#333"/></svg>
<div class="r" style="left:464.20px;top:559.00px;width:14.00px;height:15.00px;background:#f7f7f7;border:1px solid #dcdcdc;box-sizing:border-box;"></div>
<svg class="s" style="left:468.70px;top:565.00px;" width="6" height="4" viewBox="0 0 6 4"><path d="M0 0 L6 0 L3 3z" fill="#333"/></svg>
<div class="r" style="left:32.50px;top:545.50px;width:1.00px;height:29.00px;background:#4a5550;"></div>
<div class="r" style="left:106.50px;top:545.50px;width:1.00px;height:29.00px;background:#4a5550;"></div>
<div class="r" style="left:150.50px;top:545.50px;width:1.00px;height:29.00px;background:#4a5550;"></div>
<div class="r" style="left:195.00px;top:545.50px;width:1.00px;height:29.00px;background:#4a5550;"></div>
<div class="r" style="left:249.80px;top:545.50px;width:1.00px;height:29.00px;background:#4a5550;"></div>
<div class="r" style="left:294.10px;top:545.50px;width:1.00px;height:29.00px;background:#4a5550;"></div>
<div class="r" style="left:377.00px;top:545.50px;width:1.00px;height:29.00px;background:#4a5550;"></div>
<div class="r" style="left:434.30px;top:545.50px;width:1.00px;height:29.00px;background:#4a5550;"></div>
<div class="r" style="left:478.70px;top:545.50px;width:1.00px;height:29.00px;background:#4a5550;"></div>
<div class="r" style="left:18.00px;top:545.00px;width:461.20px;height:1.00px;background:#4a5550;"></div>
<div class="r" style="left:18.00px;top:574.00px;width:461.20px;height:1.00px;background:#4a5550;"></div>
<div class="r" style="left:32.50px;top:574.50px;width:1.00px;height:13.50px;background:#dadada;"></div>
<div class="r" style="left:106.70px;top:574.50px;width:1.00px;height:13.50px;background:#dadada;"></div>
<div class="r" style="left:150.70px;top:574.50px;width:1.00px;height:13.50px;background:#dadada;"></div>
<div class="r" style="left:195.50px;top:574.50px;width:1.00px;height:13.50px;background:#dadada;"></div>
<div class="r" style="left:250.30px;top:574.50px;width:1.00px;height:13.50px;background:#dadada;"></div>
<div class="r" style="left:294.60px;top:574.50px;width:1.00px;height:13.50px;background:#dadada;"></div>
<div class="r" style="left:377.50px;top:574.50px;width:1.00px;height:13.50px;background:#dadada;"></div>
<div class="r" style="left:434.80px;top:574.50px;width:1.00px;height:13.50px;background:#dadada;"></div>
<div class="r" style="left:479.20px;top:574.50px;width:1.00px;height:13.50px;background:#dadada;"></div>
<div class="t" style="left:24.00px;top:582.68px;font-size:9.00px;color:#333;font-weight:normal;font-style:normal;transform:translateX(-50%);transform-origin:50% 50%;">1</div>
<div class="t" style="left:34.40px;top:577.79px;font-size:9.60px;color:#222;font-weight:normal;font-style:normal;transform:scaleX(0.932);transform-origin:0 50%;">Login via Face ID</div>
<div class="t" style="left:128.00px;top:582.68px;font-size:9.00px;color:#333;font-weight:normal;font-style:normal;transform:translateX(-50%);transform-origin:50% 50%;">BA</div>
<div class="t" style="left:173.00px;top:582.68px;font-size:9.00px;color:#333;font-weight:normal;font-style:normal;transform:translateX(-50%);transform-origin:50% 50%;">2</div>
<div class="t" style="left:222.00px;top:582.68px;font-size:9.00px;color:#333;font-weight:normal;font-style:normal;transform:translateX(-50%);transform-origin:50% 50%;">2/2/2021</div>
<div class="t" style="left:272.30px;top:582.68px;font-size:9.00px;color:#333;font-weight:normal;font-style:normal;transform:translateX(-50%);transform-origin:50% 50%;">Pending</div>
<div class="t" style="left:335.80px;top:582.68px;font-size:9.00px;color:#333;font-weight:normal;font-style:normal;transform:translateX(-50%);transform-origin:50% 50%;">Mohammed</div>
<div class="t" style="left:405.60px;top:582.68px;font-size:9.00px;color:#333;font-weight:normal;font-style:normal;transform:translateX(-50%);transform-origin:50% 50%;">2/2/2021</div>
<div class="r" style="left:18.00px;top:262.00px;width:206.00px;height:1.00px;background:#ececec;"></div>
<div class="r" style="left:84.00px;top:257.00px;width:71.00px;height:11.00px;background:#fff;"></div>
<div class="t" style="left:86.00px;top:258.27px;font-size:8.60px;color:#111;font-weight:bold;font-style:normal;transform:scaleX(1.006);transform-origin:0 50%;">Schedule Health</div>
<div class="t" style="left:326.90px;top:258.27px;font-size:8.60px;color:#111;font-weight:bold;font-style:normal;">Task Status</div>
<div class="t" style="left:591.20px;top:258.47px;font-size:8.60px;color:#111;font-weight:bold;font-style:normal;transform:scaleX(1.009);transform-origin:0 50%;">Budget Health</div>
<div class="t" style="left:798.00px;top:262.47px;font-size:8.60px;color:#111;font-weight:bold;font-style:normal;transform:scaleX(1.014);transform-origin:0 50%;">Resource Health</div>
<svg class="s" style="left:0.00px;top:0.00px;" width="1200" height="628" viewBox="0 0 1200 628"><path d="M122.00 281.40 A61.3 61.3 0 1 1 121.99 281.40 L121.99 311.90 A30.8 30.8 0 1 0 122.00 311.90Z" fill="#9ac93a"/><defs><linearGradient id="g1" x1="0" y1="0" x2="0" y2="1"><stop offset="0" stop-color="#4aa0ba"/><stop offset="1" stop-color="#2f89a4"/></linearGradient><linearGradient id="g2" x1="0" y1="0" x2="1" y2="1"><stop offset="0" stop-color="#62c8f7"/><stop offset="1" stop-color="#3fb5ec"/></linearGradient></defs><path d="M372.20 279.80 A61.9 61.9 0 1 1 313.77 362.14 L335.67 354.48 A38.7 38.7 0 1 0 372.20 303.00Z" fill="url(#g1)"/><path d="M313.77 362.14 A61.9 61.9 0 0 1 310.30 341.70 L333.50 341.70 A38.7 38.7 0 0 0 335.67 354.48Z" fill="#45a6c9"/><path d="M310.30 341.70 A61.9 61.9 0 0 1 339.27 289.29 L351.61 308.93 A38.7 38.7 0 0 0 333.50 341.70Z" fill="#6ebcdb"/><path d="M339.27 289.29 A61.9 61.9 0 0 1 372.20 279.80 L372.20 303.00 A38.7 38.7 0 0 0 351.61 308.93Z" fill="#b5d9e7"/><path d="M294.5 286.7 L300 287 L318.9 308.8 M303 392.7 L306 392.7 L321.1 351.7 M413.4 371 L453.6 387.6" stroke="#a6a6a6" stroke-width="0.8" fill="none"/><path d="M625.60 277.70 A63.1 63.1 0 0 1 625.60 403.90 L625.60 380.90 A40.1 40.1 0 0 0 625.60 300.70Z" fill="url(#g2)"/><path d="M625.60 403.90 A63.1 63.1 0 0 1 568.34 367.32 L589.21 357.65 A40.1 40.1 0 0 0 625.60 380.90Z" fill="#4aafd6"/><path d="M568.34 367.32 A63.1 63.1 0 0 1 625.60 277.70 L625.60 300.70 A40.1 40.1 0 0 0 589.21 357.65Z" fill="#4cc39c"/><rect x="733" y="275.3" width="221.5" height="148" fill="#fff" stroke="#d9d9d9" stroke-width="0.8"/><path d="M844.5 339.3 L899.10 339.30 A54.6 54.6 0 0 1 789.90 339.30Z" fill="#3aa56e" stroke="#fff" stroke-width="1.5"/><path d="M844.5 339.3 L789.90 339.30 A54.6 54.6 0 0 1 790.43 331.70Z" fill="#a6cf4c" stroke="#fff" stroke-width="1.5"/><path d="M844.5 339.3 L790.43 331.70 A54.6 54.6 0 0 1 899.10 339.30Z" fill="#6aa836" stroke="#fff" stroke-width="1.5"/><rect x="791.6" y="409.6" width="3" height="3" fill="#a6cf4c"/><rect x="829.8" y="409.6" width="3" height="3" fill="#6aa836"/><rect x="878.5" y="409.6" width="3" height="3" fill="#3aa56e"/></svg>
<div class="t" style="left:119.50px;top:289.54px;font-size:6.80px;color:#ffffff;font-weight:bold;font-style:normal;transform:translateX(-50%);transform-origin:50% 50%;">On Track</div>
<div class="t" style="left:115.50px;top:296.74px;font-size:6.80px;color:#ffffff;font-weight:bold;font-style:normal;transform:translateX(-50%);transform-origin:50% 50%;">0%</div>
<div class="t" style="left:128.00px;top:286.24px;font-size:6.80px;color:#ffffff;font-weight:bold;font-style:normal;transform:translateX(-50%);transform-origin:50% 50%;">Worry</div>
<div class="t" style="left:128.00px;top:294.24px;font-size:6.80px;color:#ffffff;font-weight:bold;font-style:normal;transform:translateX(-50%);transform-origin:50% 50%;">0%</div>
<div class="t" style="left:122.00px;top:381.44px;font-size:6.80px;color:#ffffff;font-weight:bold;font-style:normal;transform:translateX(-50%);transform-origin:50% 50%;">Delay</div>
<div class="t" style="left:122.00px;top:389.14px;font-size:6.80px;color:#ffffff;font-weight:bold;font-style:normal;transform:translateX(-50%);transform-origin:50% 50%;">100%</div>
<div class="t" style="left:268.70px;top:279.52px;font-size:8.30px;color:#595959;font-weight:normal;font-style:normal;transform:translateX(-50%);transform-origin:50% 50%;letter-spacing:-0.3px;">Almost There</div>
<div class="t" style="left:268.70px;top:288.02px;font-size:8.30px;color:#595959;font-weight:normal;font-style:normal;transform:translateX(-50%);transform-origin:50% 50%;">9</div>
<div class="t" style="left:357.50px;top:285.32px;font-size:8.30px;color:#595959;font-weight:normal;font-style:normal;transform:translateX(-50%);transform-origin:50% 50%;">Done</div>
<div class="t" style="left:357.50px;top:293.82px;font-size:8.30px;color:#595959;font-weight:normal;font-style:normal;transform:translateX(-50%);transform-origin:50% 50%;">5</div>
<div class="t" style="left:271.60px;top:385.02px;font-size:8.30px;color:#595959;font-weight:normal;font-style:normal;transform:translateX(-50%);transform-origin:50% 50%;letter-spacing:-0.3px;">Half Done</div>
<div class="t" style="left:271.60px;top:393.52px;font-size:8.30px;color:#595959;font-weight:normal;font-style:normal;transform:translateX(-50%);transform-origin:50% 50%;">3</div>
<div class="t" style="left:476.50px;top:379.32px;font-size:8.30px;color:#595959;font-weight:normal;font-style:normal;transform:translateX(-50%);transform-origin:50% 50%;letter-spacing:-0.3px;">Not Started</div>
<div class="t" style="left:476.50px;top:387.92px;font-size:8.30px;color:#595959;font-weight:normal;font-style:normal;transform:translateX(-50%);transform-origin:50% 50%;">39</div>
<div class="t" style="left:582.60px;top:304.82px;font-size:8.30px;color:#505a62;font-weight:normal;font-style:normal;transform:translateX(-50%);transform-origin:50% 50%;letter-spacing:-0.3px;opacity:0.8">Remaining</div>
<div class="t" style="left:582.60px;top:314.02px;font-size:8.30px;color:#505a62;font-weight:normal;font-style:normal;transform:translateX(-50%);transform-origin:50% 50%;letter-spacing:-0.3px;opacity:0.8">, $600,100</div>
<div class="t" style="left:677.00px;top:332.02px;font-size:8.30px;color:#505a62;font-weight:normal;font-style:normal;transform:translateX(-50%);transform-origin:50% 50%;letter-spacing:-0.3px;opacity:0.8">Planned,</div>
<div class="t" style="left:677.00px;top:340.62px;font-size:8.30px;color:#505a62;font-weight:normal;font-style:normal;transform:translateX(-50%);transform-origin:50% 50%;letter-spacing:-0.3px;opacity:0.8">$940,500</div>
<div class="t" style="left:598.00px;top:376.52px;font-size:8.30px;color:#505a62;font-weight:normal;font-style:normal;transform:translateX(-50%);transform-origin:50% 50%;letter-spacing:-0.3px;opacity:0.8">Spend,</div>
<div class="t" style="left:598.00px;top:385.02px;font-size:8.30px;color:#505a62;font-weight:normal;font-style:normal;transform:translateX(-50%);transform-origin:50% 50%;letter-spacing:-0.3px;opacity:0.8">$340,400</div>
<div class="t" style="left:846.20px;top:309.04px;font-size:7.20px;color:#2f4f22;font-weight:normal;font-style:normal;transform:translateX(-50%);transform-origin:50% 50%;">Availability</div>
<div class="t" style="left:817.00px;top:333.44px;font-size:7.20px;color:#2f4f22;font-weight:normal;font-style:normal;transform:translateX(-50%);transform-origin:50% 50%;">Utilized</div>
<div class="t" style="left:796.80px;top:407.64px;font-size:7.20px;color:#595959;font-weight:normal;font-style:normal;">Utilized</div>
<div class="t" style="left:835.30px;top:407.64px;font-size:7.20px;color:#595959;font-weight:normal;font-style:normal;">Availability</div>
<div class="t" style="left:884.00px;top:407.64px;font-size:7.20px;color:#595959;font-weight:normal;font-style:normal;">Total</div>
<svg class="s" style="left:0.00px;top:0.00px;" width="1200" height="628" viewBox="0 0 1200 628"><rect x="64.0" y="457.3" width="0.8" height="50.69999999999999" fill="#e3e3e3"/><rect x="104.8" y="457.3" width="0.8" height="50.69999999999999" fill="#e3e3e3"/><rect x="145.6" y="457.3" width="0.8" height="50.69999999999999" fill="#e3e3e3"/><rect x="186.4" y="457.3" width="0.8" height="50.69999999999999" fill="#e3e3e3"/><rect x="227.2" y="457.3" width="0.8" height="50.69999999999999" fill="#e3e3e3"/><rect x="268.0" y="457.3" width="0.8" height="50.69999999999999" fill="#e3e3e3"/><rect x="64" y="462" width="81.6" height="3.8" fill="#8dc63f"/><rect x="64" y="474.9" width="81.6" height="3.8" fill="#3ab89b"/><rect x="64" y="487.9" width="163.2" height="3.8" fill="#1b7c96"/></svg>
<div class="t" style="left:56.80px;top:460.50px;font-size:7.30px;color:#595959;font-weight:normal;font-style:normal;transform:translateX(-100%);transform-origin:100% 50%;">Low</div>
<div class="t" style="left:151.60px;top:461.00px;font-size:7.30px;color:#333;font-weight:normal;font-style:normal;">1</div>
<div class="t" style="left:56.80px;top:473.40px;font-size:7.30px;color:#595959;font-weight:normal;font-style:normal;transform:translateX(-100%);transform-origin:100% 50%;">Medium</div>
<div class="t" style="left:151.60px;top:473.90px;font-size:7.30px;color:#333;font-weight:normal;font-style:normal;">1</div>
<div class="t" style="left:56.80px;top:486.40px;font-size:7.30px;color:#595959;font-weight:normal;font-style:normal;transform:translateX(-100%);transform-origin:100% 50%;">High</div>
<div class="t" style="left:233.20px;top:486.90px;font-size:7.30px;color:#333;font-weight:normal;font-style:normal;">2</div>
<div class="t" style="left:56.80px;top:499.40px;font-size:7.30px;color:#595959;font-weight:normal;font-style:normal;transform:translateX(-100%);transform-origin:100% 50%;">Critical</div>
<div class="t" style="left:70.00px;top:499.90px;font-size:7.30px;color:#333;font-weight:normal;font-style:normal;">0</div>
<svg class="s" style="left:0.00px;top:0.00px;" width="1200" height="628" viewBox="0 0 1200 628"><rect x="340.9" y="459.9" width="0.8" height="49.5" fill="#e3e3e3"/><rect x="392.3" y="459.9" width="0.8" height="49.5" fill="#e3e3e3"/><rect x="443.7" y="459.9" width="0.8" height="49.5" fill="#e3e3e3"/><rect x="495.1" y="459.9" width="0.8" height="49.5" fill="#e3e3e3"/><rect x="546.5" y="459.9" width="0.8" height="49.5" fill="#e3e3e3"/><rect x="597.9" y="459.9" width="0.8" height="49.5" fill="#e3e3e3"/><rect x="340.9" y="463.4" width="102.8" height="3.8" fill="#8dc63f"/><rect x="340.9" y="476.3" width="102.8" height="3.8" fill="#3ab89b"/><rect x="340.9" y="501" width="205.6" height="3.8" fill="#e05252"/></svg>
<div class="t" style="left:334.00px;top:461.90px;font-size:7.30px;color:#595959;font-weight:normal;font-style:normal;transform:translateX(-100%);transform-origin:100% 50%;">Low</div>
<div class="t" style="left:449.70px;top:462.40px;font-size:7.30px;color:#333;font-weight:normal;font-style:normal;">1</div>
<div class="t" style="left:334.00px;top:474.80px;font-size:7.30px;color:#595959;font-weight:normal;font-style:normal;transform:translateX(-100%);transform-origin:100% 50%;">Medium</div>
<div class="t" style="left:449.70px;top:475.30px;font-size:7.30px;color:#333;font-weight:normal;font-style:normal;">1</div>
<div class="t" style="left:334.00px;top:487.20px;font-size:7.30px;color:#595959;font-weight:normal;font-style:normal;transform:translateX(-100%);transform-origin:100% 50%;">High</div>
<div class="t" style="left:346.90px;top:487.70px;font-size:7.30px;color:#333;font-weight:normal;font-style:normal;">0</div>
<div class="t" style="left:334.00px;top:499.50px;font-size:7.30px;color:#595959;font-weight:normal;font-style:normal;transform:translateX(-100%);transform-origin:100% 50%;">Critical</div>
<div class="t" style="left:552.50px;top:500.00px;font-size:7.30px;color:#333;font-weight:normal;font-style:normal;">2</div>
<div class="r" style="left:0.00px;top:588.00px;width:1200.00px;height:21.00px;background:#e8e8e8;"></div>
<div class="r" style="left:0.00px;top:588.00px;width:1181.00px;height:1.00px;background:#c6c6c6;"></div>
<div class="r" style="left:0.00px;top:608.50px;width:1200.00px;height:1.00px;background:#d2d2d2;"></div>
<svg class="s" style="left:19.00px;top:594.50px;" width="5" height="7" viewBox="0 0 5 7"><path d="M4.5 0 L0.5 3.5 L4.5 7z" fill="#c8c8c8"/></svg>
<svg class="s" style="left:40.50px;top:595.00px;" width="4" height="6" viewBox="0 0 4 6"><path d="M0.2 0 L3.8 3 L0.2 6z" fill="#0f2a10"/></svg>
<div class="r" style="left:74.50px;top:590.00px;width:1.00px;height:16.00px;background:#d0d0d0;"></div>
<div class="t" style="left:82.50px;top:591.66px;font-size:12.80px;color:#444;font-weight:normal;font-style:normal;-webkit-text-stroke:0.15px currentColor;">Control</div>
<div class="r" style="left:132.5px;top:588px;width:78.8px;height:18px;background:linear-gradient(#ffffff 0%, #f6f0fa 40%, #d2b2e6 100%);border-left:1px solid #c6c6c6;border-right:1px solid #c6c6c6;box-sizing:border-box;"></div>
<div class="r" style="left:132.50px;top:605.50px;width:78.80px;height:1.00px;background:#6b9b7a;"></div>
<div class="t" style="left:141.25px;top:591.66px;font-size:12.80px;color:#1f6a45;font-weight:bold;font-style:normal;transform:scaleX(0.935);transform-origin:0 50%;">Dashboard</div>
<div class="r" style="left:213.75px;top:590.00px;width:64.25px;height:16.70px;background:#0c1c5c;overflow:hidden;"></div>
<div class="r" style="left:281.25px;top:590.00px;width:54.25px;height:16.70px;background:#7030a0;overflow:hidden;"></div>
<div class="r" style="left:338.75px;top:590.00px;width:71.25px;height:16.70px;background:#7030a0;overflow:hidden;"></div>
<div class="r" style="left:413.00px;top:590.00px;width:42.00px;height:16.70px;background:#40bfa0;overflow:hidden;"></div>
<div class="r" style="left:458.00px;top:590.00px;width:47.00px;height:16.70px;background:#40bfa0;overflow:hidden;"></div>
<div class="r" style="left:508.75px;top:590.00px;width:55.75px;height:16.70px;background:#40bfa0;overflow:hidden;"></div>
<div class="r" style="left:567.30px;top:590.00px;width:112.70px;height:16.70px;background:#40bfa0;overflow:hidden;"></div>
<div class="r" style="left:683.30px;top:590.00px;width:68.40px;height:16.70px;background:#9fd37c;overflow:hidden;"></div>
<div class="r" style="left:755.00px;top:590.00px;width:79.00px;height:16.70px;background:#ffc000;overflow:hidden;"></div>
<div class="r" style="left:837.30px;top:590.00px;width:19.70px;height:16.70px;background:#9fd37c;overflow:hidden;"></div>
<div class="t" style="left:220.00px;top:591.66px;font-size:12.80px;color:#fff;font-weight:normal;font-style:normal;transform:scaleX(0.937);transform-origin:0 50%;-webkit-text-stroke:0.2px currentColor;">Schedule</div>
<div class="t" style="left:288.75px;top:591.66px;font-size:12.80px;color:#f4ecfa;font-weight:normal;font-style:normal;transform:scaleX(0.955);transform-origin:0 50%;-webkit-text-stroke:0.2px currentColor;">Budget</div>
<div class="t" style="left:347.50px;top:591.66px;font-size:12.80px;color:#f4ecfa;font-weight:normal;font-style:normal;transform:scaleX(0.879);transform-origin:0 50%;-webkit-text-stroke:0.2px currentColor;">Resources</div>
<div class="t" style="left:420.00px;top:591.66px;font-size:12.80px;color:#173a34;font-weight:normal;font-style:normal;transform:scaleX(0.863);transform-origin:0 50%;-webkit-text-stroke:0.2px currentColor;">Risks</div>
<div class="t" style="left:466.25px;top:591.66px;font-size:12.80px;color:#173a34;font-weight:normal;font-style:normal;transform:scaleX(0.831);transform-origin:0 50%;-webkit-text-stroke:0.2px currentColor;">Issues</div>
<div class="t" style="left:516.25px;top:591.66px;font-size:12.80px;color:#173a34;font-weight:normal;font-style:normal;transform:scaleX(0.953);transform-origin:0 50%;-webkit-text-stroke:0.2px currentColor;">Actions</div>
<div class="t" style="left:577.30px;top:591.66px;font-size:12.80px;color:#173a34;font-weight:normal;font-style:normal;transform:scaleX(0.905);transform-origin:0 50%;-webkit-text-stroke:0.2px currentColor;">Change Requests</div>
<div class="t" style="left:691.70px;top:591.66px;font-size:12.80px;color:#1f3a1a;font-weight:normal;font-style:normal;transform:scaleX(0.919);transform-origin:0 50%;-webkit-text-stroke:0.2px currentColor;">Decisions</div>
<div class="t" style="left:763.30px;top:591.66px;font-size:12.80px;color:#2a2410;font-weight:normal;font-style:normal;transform:scaleX(0.953);transform-origin:0 50%;-webkit-text-stroke:0.2px currentColor;">Documents</div>
<div class="t" style="left:843.30px;top:591.66px;font-size:12.80px;color:#1f3a1a;font-weight:normal;font-style:normal;width:13px;overflow:hidden;-webkit-text-stroke:0.2px currentColor;">Co</div>
<div class="t" style="left:866.00px;top:592.74px;font-size:12.00px;color:#333;font-weight:bold;font-style:normal;transform:translateX(-50%);transform-origin:50% 50%;">...</div>
<svg class="s" style="left:881.50px;top:591.50px;" width="13" height="13" viewBox="0 0 13 13"><circle cx="6.5" cy="6.5" r="5.8" fill="none" stroke="#555" stroke-width="1"/><path d="M6.5 3 L6.5 10 M3 6.5 L10 6.5" stroke="#444" stroke-width="1.1"/></svg>
<div class="r" style="left:908.50px;top:592.50px;width:1.50px;height:1.50px;background:#aaa;"></div>
<div class="r" style="left:908.50px;top:596.50px;width:1.50px;height:1.50px;background:#aaa;"></div>
<div class="r" style="left:908.50px;top:600.50px;width:1.50px;height:1.50px;background:#aaa;"></div>
<div class="r" style="left:922.00px;top:591.25px;width:260.00px;height:13.75px;background:#e6e6e6;"></div>
<div class="r" style="left:922.00px;top:591.25px;width:14.00px;height:13.75px;background:#fff;"></div>
<svg class="s" style="left:926.50px;top:594.50px;" width="5" height="7" viewBox="0 0 5 7"><path d="M4.5 0 L0.5 3.5 L4.5 7z" fill="#444"/></svg>
<div class="r" style="left:937.00px;top:591.25px;width:220.50px;height:13.75px;background:#fff;border:1px solid #d0d0d0;box-sizing:border-box;"></div>
<div class="r" style="left:1167.50px;top:591.25px;width:14.50px;height:13.75px;background:#fff;"></div>
<svg class="s" style="left:1172.50px;top:594.50px;" width="5" height="7" viewBox="0 0 5 7"><path d="M0.5 0 L4.5 3.5 L0.5 7z" fill="#444"/></svg>
<div class="r" style="left:1182.00px;top:588.00px;width:18.00px;height:20.50px;background:#e8e8e8;"></div>
<div class="r" style="left:0.00px;top:609.50px;width:1200.00px;height:18.50px;background:#f0f0f0;"></div>
<div class="t" style="left:4.50px;top:614.26px;font-size:10.70px;color:#555;font-weight:normal;font-style:normal;transform:scaleX(0.841);transform-origin:0 50%;">Ready</div>
<div class="t" style="left:41.25px;top:614.26px;font-size:10.70px;color:#555;font-weight:normal;font-style:normal;transform:scaleX(0.927);transform-origin:0 50%;">1 of 5 records found</div>
<svg class="s" style="left:142.00px;top:612.00px;" width="14" height="14" viewBox="0 0 14 14"><rect x="0.5" y="0.5" width="5" height="4" fill="#777"/><rect x="6.5" y="1" width="7" height="2" fill="#777"/><path d="M1 6.5 L13 6.5 M1 9.5 L13 9.5 M1 12.5 L13 12.5 M4.5 6 L4.5 13.5 M8.5 6 L8.5 13.5 M12.5 6 L12.5 13.5" stroke="#999" stroke-width="0.8"/></svg>
<div class="r" style="left:956.25px;top:609.50px;width:27.50px;height:18.50px;background:#d0d0d0;"></div>
<svg class="s" style="left:964.00px;top:612.50px;" width="13" height="13" viewBox="0 0 13 13"><rect x="0.5" y="0.5" width="12" height="12" fill="none" stroke="#666"/><path d="M4.5 0.5 L4.5 12.5 M8.5 0.5 L8.5 12.5 M0.5 4.5 L12.5 4.5 M0.5 8.5 L12.5 8.5" stroke="#666"/></svg>
<svg class="s" style="left:992.00px;top:612.50px;" width="12" height="13" viewBox="0 0 12 13"><rect x="0.5" y="0.5" width="11" height="12" fill="none" stroke="#777"/><rect x="2.5" y="2.5" width="7" height="8" fill="none" stroke="#777"/><path d="M4 4.5 L8 4.5 M4 6.5 L8 6.5 M4 8.5 L8 8.5" stroke="#777" stroke-width="0.7"/></svg>
<svg class="s" style="left:1020.00px;top:612.00px;" width="13" height="13" viewBox="0 0 13 13"><path d="M0.5 0.5 L0.5 12.5 L12.5 12.5 L12.5 0.5 M5.5 0.5 L5.5 8.5 L0.5 8.5 M5.5 8.5 L12.5 8.5 M8.5 0.5 L8.5 8.5" stroke="#777" fill="none"/></svg>
<div class="r" style="left:1044.00px;top:618.50px;width:7.00px;height:1.50px;background:#444;"></div>
<div class="r" style="left:1055.00px;top:618.80px;width:92.50px;height:1.00px;background:#a0a0a0;"></div>
<div class="r" style="left:1084.70px;top:614.00px;width:3.30px;height:10.00px;background:#444;"></div>
<div class="r" style="left:1101.00px;top:616.50px;width:1.00px;height:4.50px;background:#999;"></div>
<div class="r" style="left:1151.50px;top:618.50px;width:7.00px;height:1.50px;background:#444;"></div>
<div class="r" style="left:1154.25px;top:615.50px;width:1.50px;height:7.50px;background:#444;"></div>
<div class="t" style="left:1170.00px;top:614.26px;font-size:10.70px;color:#555;font-weight:normal;font-style:normal;transform:scaleX(0.876);transform-origin:0 50%;">70%</div>
</body></html>
